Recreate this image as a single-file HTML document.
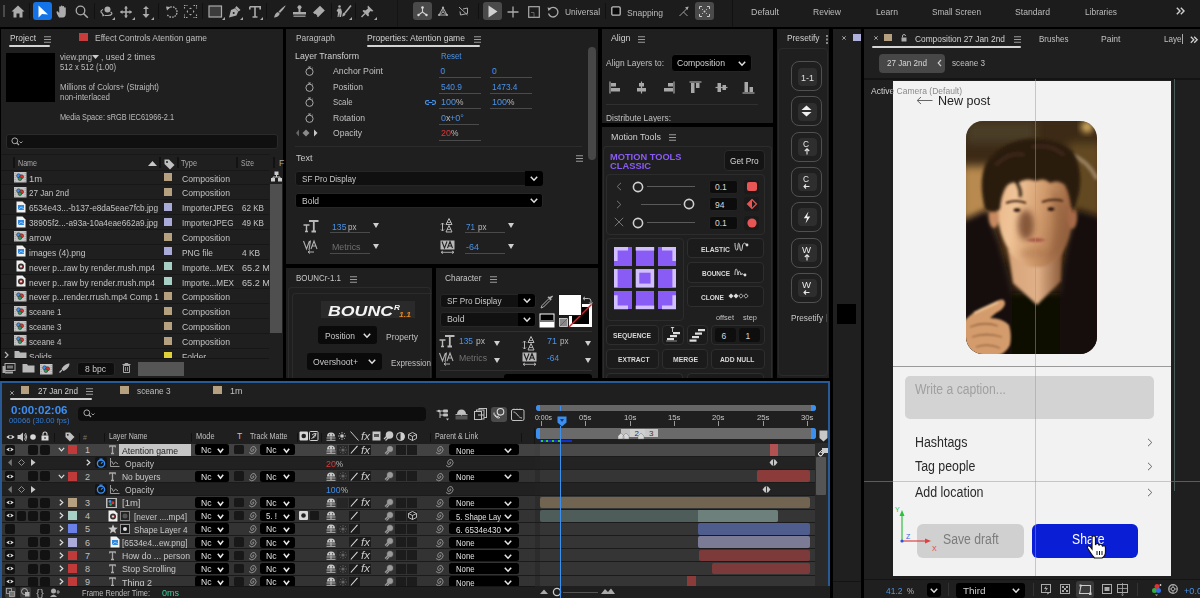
<!DOCTYPE html>
<html><head><meta charset="utf-8"><style>
*{margin:0;padding:0;box-sizing:border-box}
html,body{width:1200px;height:598px;overflow:hidden}
body{background:#000;position:relative;font-family:"Liberation Sans",sans-serif;font-size:8px;color:#b4b4b4}
.a{position:absolute}
svg.a{overflow:visible}
.t{position:absolute;white-space:nowrap;line-height:1;transform-origin:0 0}

</style></head><body>
<div class="a" style="left:0px;top:0px;width:1200px;height:27px;background:#1c1c1c;"></div>
<div class="a" style="left:3px;top:5px;width:2px;height:12px;background:#4a4a4a;"></div>
<svg class="a" style="left:11px;top:5px;" width="14" height="13" viewBox="0 0 14 13"><path d="M7 0.5L0.5 6.5H2.5V12.5H5.5V8.5H8.5V12.5H11.5V6.5H13.5Z" fill="#ababab"/></svg>
<div class="a" style="left:29px;top:3px;width:1px;height:16px;background:#111;"></div>
<div class="a" style="left:33px;top:2px;width:19px;height:18px;background:#1473e6;border-radius:3px;"></div>
<svg class="a" style="left:38px;top:5px;" width="11" height="13" viewBox="0 0 11 13"><path d="M0.5 0.5V12.5L4 9L10 9.5Z" fill="#fff"/></svg>
<svg class="a" style="left:56px;top:5px;" width="13" height="13" viewBox="0 0 13 13"><path d="M3 12.5C1.5 10 0.5 8 0.5 7C0.5 6 2 6 2.8 7.5L3.2 8V2C3.2 1 4.8 1 4.8 2V6V1.2C4.8 0.2 6.5 0.2 6.5 1.2V6V1.8C6.5 0.8 8.2 0.8 8.2 1.8V6.2V3C8.2 2 9.8 2 9.8 3V8.5C9.8 11 8.5 12.5 7 12.5Z" fill="#ababab"/></svg>
<svg class="a" style="left:75px;top:5px;" width="14" height="14" viewBox="0 0 14 14"><circle cx="5.5" cy="5.5" r="4.3" fill="none" stroke="#ababab" stroke-width="1.3"/><path d="M8.5 8.5L12.8 12.8" stroke="#ababab" stroke-width="1.6"/></svg>
<div class="a" style="left:94px;top:3px;width:1px;height:16px;background:#111;"></div>
<svg class="a" style="left:100px;top:6px;" width="14" height="11" viewBox="0 0 14 11"><circle cx="7.5" cy="3.5" r="3" fill="#ababab"/><path d="M3 3.5C0 4.5 0.5 7 3 7.5M10.5 6C13 7 12 9.5 8 9.5H5" fill="none" stroke="#ababab" stroke-width="1.2"/><path d="M2 7L5 9.5L2.5 10.5Z" fill="#ababab"/></svg>
<svg class="a" style="left:112px;top:17px;" width="3" height="3" viewBox="0 0 3 3"><path d="M3 0V3H0Z" fill="#ababab"/></svg>
<svg class="a" style="left:120px;top:6px;" width="12" height="12" viewBox="0 0 12 12"><path d="M6 0.5V11.5M0.5 6H11.5" stroke="#ababab" stroke-width="1.6"/><path d="M6 0L4 2.5H8ZM6 12L4 9.5H8ZM0 6L2.5 4V8ZM12 6L9.5 4V8Z" fill="#ababab"/></svg>
<svg class="a" style="left:132px;top:17px;" width="3" height="3" viewBox="0 0 3 3"><path d="M3 0V3H0Z" fill="#ababab"/></svg>
<svg class="a" style="left:142px;top:6px;" width="8" height="12" viewBox="0 0 8 12"><path d="M4 1V11" stroke="#ababab" stroke-width="1.4"/><path d="M4 0L1 3H7ZM4 12L0.5 8H7.5Z" fill="#ababab"/></svg>
<svg class="a" style="left:151px;top:17px;" width="3" height="3" viewBox="0 0 3 3"><path d="M3 0V3H0Z" fill="#ababab"/></svg>
<div class="a" style="left:158px;top:3px;width:1px;height:16px;background:#111;"></div>
<svg class="a" style="left:165px;top:5px;" width="13" height="14" viewBox="0 0 13 14"><path d="M3 3.5A5.2 5.2 0 1 1 2 9" fill="none" stroke="#ababab" stroke-width="1.3" stroke-dasharray="1.6 1"/><path d="M1 1.5L5.5 2L2 5.5Z" fill="#ababab"/></svg>
<svg class="a" style="left:184px;top:5px;" width="13" height="13" viewBox="0 0 13 13"><path d="M0.5 3.5V0.5H3.5M9.5 0.5H12.5V3.5M12.5 9.5V12.5H9.5M3.5 12.5H0.5V9.5" fill="none" stroke="#ababab" stroke-width="1.1" stroke-dasharray="1.5 1"/><path d="M6.5 2.5L5 4H8ZM6.5 10.5L5 9H8ZM2.5 6.5L4 5V8ZM10.5 6.5L9 5V8Z" fill="#ababab"/></svg>
<div class="a" style="left:202px;top:3px;width:1px;height:16px;background:#111;"></div>
<svg class="a" style="left:208px;top:5px;" width="15" height="13" viewBox="0 0 15 13"><rect x="1" y="1" width="12.5" height="11" fill="#3c3c3c" stroke="#ababab" stroke-width="1.2"/></svg>
<svg class="a" style="left:222px;top:17px;" width="3" height="3" viewBox="0 0 3 3"><path d="M3 0V3H0Z" fill="#ababab"/></svg>
<svg class="a" style="left:228px;top:5px;" width="14" height="14" viewBox="0 0 14 14"><path d="M8.5 1L12.5 5L10.5 6.5L7 3Z" fill="#ababab"/><path d="M7 3.3L10.2 6.5L8.5 10.5L1 12.5L3 5Z" fill="#ababab"/><circle cx="5.7" cy="8" r="1" fill="#1c1c1c"/></svg>
<svg class="a" style="left:240px;top:17px;" width="3" height="3" viewBox="0 0 3 3"><path d="M3 0V3H0Z" fill="#ababab"/></svg>
<svg class="a" style="left:249px;top:6px;" width="12" height="12" viewBox="0 0 12 12"><path d="M0.8 0.8H11.2V3.5M0.8 3.5V0.8M6 0.8V11M3.5 11H8.5" fill="none" stroke="#ababab" stroke-width="1.6"/></svg>
<svg class="a" style="left:260px;top:17px;" width="3" height="3" viewBox="0 0 3 3"><path d="M3 0V3H0Z" fill="#ababab"/></svg>
<div class="a" style="left:266px;top:3px;width:1px;height:16px;background:#111;"></div>
<svg class="a" style="left:273px;top:5px;" width="14" height="14" viewBox="0 0 14 14"><path d="M12.5 0.5C13 1 9 6 7 8L5.5 6.5C7.5 4.5 12 0 12.5 0.5Z" fill="#ababab"/><path d="M5 7L6.8 8.8C6 11 4 12.5 0.8 12.5C2 11.5 1.5 8 5 7Z" fill="#ababab"/></svg>
<svg class="a" style="left:292px;top:5px;" width="15" height="13" viewBox="0 0 15 13"><circle cx="7.5" cy="2.3" r="2" fill="#ababab"/><path d="M6.5 3.5H8.5V7H14V9.5H1V7H6.5Z" fill="#ababab"/><rect x="1.5" y="10.5" width="12" height="1.5" fill="#8a8a8a"/></svg>
<svg class="a" style="left:312px;top:5px;" width="14" height="14" viewBox="0 0 14 14"><path d="M8 0.8L12.8 5.5L6 12.3L1 7.5Z" fill="#ababab"/><path d="M3 9.3L4.8 11.2" stroke="#1c1c1c" stroke-width="1.4"/></svg>
<div class="a" style="left:331px;top:3px;width:1px;height:16px;background:#111;"></div>
<svg class="a" style="left:336px;top:5px;" width="16" height="13" viewBox="0 0 16 13"><circle cx="3.5" cy="1.5" r="1.3" fill="#ababab"/><path d="M2 3.5H5L6 7L5 12H3.5L3.5 8L2.5 12H1.5L2 7L0.5 6Z" fill="#ababab"/><path d="M15 0.5L9 8" stroke="#ababab" stroke-width="1.6"/><path d="M8.5 7.5C10 8.5 10 11 6 11.5C7 10 6 8 8.5 7.5Z" fill="#ababab"/></svg>
<svg class="a" style="left:349px;top:17px;" width="3" height="3" viewBox="0 0 3 3"><path d="M3 0V3H0Z" fill="#ababab"/></svg>
<div class="a" style="left:355px;top:3px;width:1px;height:16px;background:#111;"></div>
<svg class="a" style="left:361px;top:5px;" width="13" height="13" viewBox="0 0 13 13"><path d="M7 0.5L12.5 6L11 6.5L9.5 6L7.5 8.5L8 10.5L7 11.5L1.5 6L2.5 5L4.5 5.5L7 3.5L6.5 2Z" fill="#ababab"/><path d="M4 8.5L0.5 12" stroke="#ababab" stroke-width="1.4"/></svg>
<svg class="a" style="left:374px;top:17px;" width="3" height="3" viewBox="0 0 3 3"><path d="M3 0V3H0Z" fill="#ababab"/></svg>
<div class="a" style="left:397px;top:0px;width:1px;height:27px;background:#141414;"></div>
<div class="a" style="left:413px;top:2px;width:19px;height:18px;background:#4a4a4a;border-radius:3px;"></div>
<svg class="a" style="left:417px;top:6px;" width="11" height="11" viewBox="0 0 11 11"><path d="M5.5 1.5V6L1.5 9M5.5 6L9.5 9" stroke="#d0d0d0" stroke-width="1.1" fill="none"/><circle cx="5.5" cy="1.5" r="1.3" fill="#ddd"/><circle cx="1.5" cy="9" r="1.2" fill="#ddd"/><circle cx="9.5" cy="9" r="1.2" fill="#ddd"/></svg>
<svg class="a" style="left:437px;top:6px;" width="12" height="11" viewBox="0 0 12 11"><path d="M6 1.5L2 9H10Z M6 1.5V6L2 9M6 6L10 9" stroke="#ababab" stroke-width="1" fill="none"/><circle cx="6" cy="1.5" r="1.1" fill="#ababab"/><circle cx="2" cy="9" r="1.1" fill="#ababab"/><circle cx="10" cy="9" r="1.1" fill="#ababab"/></svg>
<svg class="a" style="left:458px;top:6px;" width="11" height="10" viewBox="0 0 11 10"><path d="M1 1L9.5 9M2 5.5L2.5 9L9.5 7.5V2L5 3" stroke="#ababab" stroke-width="1" fill="none"/></svg>
<div class="a" style="left:478px;top:3px;width:1px;height:16px;background:#111;"></div>
<div class="a" style="left:483px;top:2px;width:19px;height:18px;background:#4a4a4a;border-radius:3px;"></div>
<svg class="a" style="left:488px;top:5px;" width="10" height="13" viewBox="0 0 10 13"><path d="M0.5 0.5V12.5L9.5 6.5Z" fill="#d0d0d0"/></svg>
<svg class="a" style="left:507px;top:6px;" width="12" height="12" viewBox="0 0 12 12"><path d="M6 0.5V11.5M0.5 6H11.5" stroke="#ababab" stroke-width="1.3"/></svg>
<svg class="a" style="left:528px;top:6px;" width="12" height="12" viewBox="0 0 12 12"><rect x="0.7" y="0.7" width="10.6" height="10.6" fill="none" stroke="#ababab" stroke-width="1.2"/><path d="M3 6.5H6V11" fill="none" stroke="#777" stroke-width="0.8"/></svg>
<svg class="a" style="left:547px;top:6px;" width="12" height="12" viewBox="0 0 12 12"><path d="M2.5 3A4.8 4.8 0 1 1 1.5 7.5" fill="none" stroke="#ababab" stroke-width="1.3"/><path d="M0.5 1.5L4.5 2.2L1.5 5Z" fill="#ababab"/></svg>
<div class="t" style="transform:scaleX(0.884);left:565px;top:7.23px;font-size:9.5px;color:#bcbcbc;">Universal</div>
<div class="a" style="left:605px;top:3px;width:1px;height:16px;background:#111;"></div>
<svg class="a" style="left:611px;top:6px;" width="10" height="10" viewBox="0 0 10 10"><rect x="0.8" y="0.8" width="8.4" height="8.4" rx="1.2" fill="#0a0a0a" stroke="#bdbdbd" stroke-width="1.3"/></svg>
<div class="t" style="transform:scaleX(0.896);left:627px;top:8.23px;font-size:9.5px;color:#bcbcbc;">Snapping</div>
<svg class="a" style="left:679px;top:6px;" width="10" height="11" viewBox="0 0 10 11"><path d="M0.5 10L4.5 6L8.5 10M4.5 6L9 1.5" stroke="#ababab" stroke-width="0.9" fill="none"/><path d="M9.5 0.5L6 1.5L8.5 4Z" fill="#ababab"/></svg>
<div class="a" style="left:695px;top:2px;width:19px;height:18px;background:#4a4a4a;border-radius:3px;"></div>
<svg class="a" style="left:699px;top:6px;" width="11" height="11" viewBox="0 0 11 11"><path d="M0.5 3V0.5H3M8 0.5H10.5V3M10.5 8V10.5H8M3 10.5H0.5V8" fill="none" stroke="#ccc" stroke-width="1"/><circle cx="5.5" cy="5.5" r="1" fill="#ccc"/><path d="M3 3L4 4M8 3L7 4M3 8L4 7M8 8L7 7" stroke="#ccc" stroke-width="0.8"/></svg>
<div class="a" style="left:732px;top:0px;width:1px;height:27px;background:#111;"></div>
<div class="t" style="transform:scaleX(0.950);left:751px;top:8.39px;font-size:9.3px;color:#bcbcbc;">Default</div>
<div class="t" style="transform:scaleX(0.919);left:813px;top:8.39px;font-size:9.3px;color:#bcbcbc;">Review</div>
<div class="t" style="transform:scaleX(0.925);left:876px;top:8.39px;font-size:9.3px;color:#bcbcbc;">Learn</div>
<div class="t" style="transform:scaleX(0.886);left:932px;top:8.39px;font-size:9.3px;color:#bcbcbc;">Small Screen</div>
<div class="t" style="transform:scaleX(0.928);left:1015px;top:8.39px;font-size:9.3px;color:#bcbcbc;">Standard</div>
<div class="t" style="transform:scaleX(0.897);left:1085px;top:8.39px;font-size:9.3px;color:#bcbcbc;">Libraries</div>
<svg class="a" style="left:1176px;top:7px;" width="9" height="9" viewBox="0 0 9 9"><path d="M0.8 0.8L4 4L0.8 7.2M4.8 0.8L8 4L4.8 7.2" stroke="#d0d0d0" stroke-width="1.4" fill="none"/></svg>
<div class="a" style="left:1px;top:29px;width:282px;height:349px;background:#1f1f1f;"></div>
<div class="t" style="transform:scaleX(0.879);left:10px;top:33.22px;font-size:9.5px;color:#d0d0d0;">Project</div>
<svg class="a" style="left:44px;top:36px;" width="7" height="7" viewBox="0 0 7 7"><path d="M0 0.75H7M0 3.5H7M0 6.25H7" stroke="#9a9a9a" stroke-width="1.2"/></svg>
<div class="a" style="left:9px;top:45px;width:41px;height:2px;background:#d4d4d4;border-radius:1px;"></div>
<div class="a" style="left:79px;top:33px;width:9px;height:8px;background:#c83c3c;"></div>
<div class="t" style="transform:scaleX(0.892);left:95px;top:33.22px;font-size:9.5px;color:#c0c0c0;">Effect Controls Atention game</div>
<div class="a" style="left:6px;top:53px;width:49px;height:49px;background:#000;"></div>
<div class="t" style="transform:scaleX(0.967);left:60px;top:52.98px;font-size:8.5px;color:#bdbdbd;">view.png</div>
<svg class="a" style="left:92px;top:55px;" width="7" height="4" viewBox="0 0 7 4"><path d="M0 0H7L3.5 4Z" fill="#ccc"/></svg>
<div class="t" style="transform:scaleX(1.020);left:101px;top:52.98px;font-size:8.5px;color:#bdbdbd;">, used 2 times</div>
<div class="t" style="transform:scaleX(0.905);left:60px;top:62.98px;font-size:8.5px;color:#bdbdbd;">512 x 512 (1.00)</div>
<div class="t" style="transform:scaleX(0.925);left:60px;top:82.98px;font-size:8.5px;color:#bdbdbd;">Millions of Colors+ (Straight)</div>
<div class="t" style="transform:scaleX(0.928);left:60px;top:92.98px;font-size:8.5px;color:#bdbdbd;">non-interlaced</div>
<div class="t" style="transform:scaleX(0.865);left:60px;top:112.98px;font-size:8.5px;color:#bdbdbd;">Media Space: sRGB IEC61966-2.1</div>
<div class="a" style="left:6px;top:134px;width:272px;height:15px;background:#101010;border-radius:3px;border:1px solid #2a2a2a;"></div>
<svg class="a" style="left:11px;top:137px;" width="13" height="9" viewBox="0 0 13 9"><circle cx="3.8" cy="3.8" r="2.9" fill="none" stroke="#aaa" stroke-width="1"/><path d="M5.8 5.8L8 8" stroke="#aaa" stroke-width="1.2"/><path d="M8.5 4.5L10 6L11.5 4.5" stroke="#aaa" stroke-width="0.9" fill="none"/></svg>
<div class="a" style="left:1px;top:154px;width:269px;height:1px;background:#181818;"></div>
<div class="a" style="left:13px;top:157px;width:2px;height:11px;background:#121212;"></div>
<div class="a" style="left:159px;top:157px;width:2px;height:11px;background:#121212;"></div>
<div class="a" style="left:177px;top:157px;width:2px;height:11px;background:#121212;"></div>
<div class="a" style="left:236px;top:157px;width:2px;height:11px;background:#121212;"></div>
<div class="a" style="left:273px;top:157px;width:2px;height:11px;background:#121212;"></div>
<div class="t" style="transform:scaleX(0.837);left:18px;top:158.97px;font-size:8.5px;color:#a8a8a8;">Name</div>
<svg class="a" style="left:148px;top:161px;" width="9" height="5" viewBox="0 0 9 5"><path d="M0 5L4.5 0L9 5Z" fill="#c8c8c8"/></svg>
<svg class="a" style="left:164px;top:159px;" width="11" height="10" viewBox="0 0 11 10"><path d="M0.5 0.5H5L10.5 6L6 10.5L0.5 5Z" fill="#c0c0c0"/><circle cx="3" cy="3" r="1" fill="#1f1f1f"/></svg>
<div class="t" style="transform:scaleX(0.868);left:181px;top:158.97px;font-size:8.5px;color:#a8a8a8;">Type</div>
<div class="t" style="transform:scaleX(0.786);left:241px;top:158.97px;font-size:8.5px;color:#a8a8a8;">Size</div>
<div class="t" style="left:279px;top:158.97px;font-size:8.5px;color:#a8a8a8;">F</div>
<div class="a" style="left:1px;top:170px;width:269px;height:1px;background:#171717;"></div>
<svg class="a" style="left:14px;top:172px;" width="13" height="11" viewBox="0 0 13 11"><rect x="0" y="0" width="12.5" height="10.5" fill="#c4c4c4"/><path d="M0.5 1.5H2M0.5 3.5H2M0.5 5.5H2M0.5 7.5H2M0.5 9.5H2M10.5 1.5H12M10.5 3.5H12M10.5 5.5H12M10.5 7.5H12M10.5 9.5H12" stroke="#a0a0a0" stroke-width="0.7"/><circle cx="4.6" cy="3.8" r="2" fill="#3b8eea" stroke="#333" stroke-width="0.6"/><circle cx="7.6" cy="4.8" r="2" fill="#e0302a" stroke="#333" stroke-width="0.6"/><circle cx="5.9" cy="6.8" r="1.8" fill="#2a9a5a" stroke="#333" stroke-width="0.6"/></svg>
<div class="t" style="transform:scaleX(1.039);left:28.5px;top:174.85px;font-size:9px;color:#c4c4c4;">1m</div>
<div class="a" style="left:164px;top:173px;width:8px;height:8px;background:#b5a17f;"></div>
<div class="t" style="transform:scaleX(0.959);left:182px;top:174.85px;font-size:9px;color:#c4c4c4;">Composition</div>
<div class="a" style="left:1px;top:184px;width:269px;height:1px;background:#171717;"></div>
<svg class="a" style="left:14px;top:187px;" width="13" height="11" viewBox="0 0 13 11"><rect x="0" y="0" width="12.5" height="10.5" fill="#c4c4c4"/><path d="M0.5 1.5H2M0.5 3.5H2M0.5 5.5H2M0.5 7.5H2M0.5 9.5H2M10.5 1.5H12M10.5 3.5H12M10.5 5.5H12M10.5 7.5H12M10.5 9.5H12" stroke="#a0a0a0" stroke-width="0.7"/><circle cx="4.6" cy="3.8" r="2" fill="#3b8eea" stroke="#333" stroke-width="0.6"/><circle cx="7.6" cy="4.8" r="2" fill="#e0302a" stroke="#333" stroke-width="0.6"/><circle cx="5.9" cy="6.8" r="1.8" fill="#2a9a5a" stroke="#333" stroke-width="0.6"/></svg>
<div class="t" style="transform:scaleX(0.898);left:28.5px;top:188.85px;font-size:9px;color:#c4c4c4;">27 Jan 2nd</div>
<div class="a" style="left:164px;top:188px;width:8px;height:8px;background:#b5a17f;"></div>
<div class="t" style="transform:scaleX(0.959);left:182px;top:188.85px;font-size:9px;color:#c4c4c4;">Composition</div>
<div class="a" style="left:1px;top:199px;width:269px;height:1px;background:#171717;"></div>
<svg class="a" style="left:16px;top:201px;" width="10" height="12" viewBox="0 0 10 12"><path d="M0.5 0.5H6.5L9.5 3.5V11.5H0.5Z" fill="#f0f0f0"/><rect x="2" y="4" width="6" height="5" fill="#2f8ae0"/><path d="M2 9L5 6L8 8" stroke="#9cd0ff" stroke-width="0.8" fill="none"/></svg>
<div class="t" style="transform:scaleX(0.921);left:28.5px;top:203.85px;font-size:9px;color:#c4c4c4;">6534e43...-b137-e8da5eae7fcb.jpg</div>
<div class="a" style="left:164px;top:203px;width:8px;height:8px;background:#aaaad8;"></div>
<div class="t" style="transform:scaleX(0.903);left:182px;top:203.85px;font-size:9px;color:#c4c4c4;">ImporterJPEG</div>
<div class="t" style="transform:scaleX(0.897);left:242px;top:203.85px;font-size:9px;color:#c4c4c4;">62 KB</div>
<div class="a" style="left:1px;top:214px;width:269px;height:1px;background:#171717;"></div>
<svg class="a" style="left:16px;top:216px;" width="10" height="12" viewBox="0 0 10 12"><path d="M0.5 0.5H6.5L9.5 3.5V11.5H0.5Z" fill="#f0f0f0"/><rect x="2" y="4" width="6" height="5" fill="#2f8ae0"/><path d="M2 9L5 6L8 8" stroke="#9cd0ff" stroke-width="0.8" fill="none"/></svg>
<div class="t" style="transform:scaleX(0.917);left:28.5px;top:218.85px;font-size:9px;color:#c4c4c4;">38905f2...-a93a-10a4eae662a9.jpg</div>
<div class="a" style="left:164px;top:218px;width:8px;height:8px;background:#aaaad8;"></div>
<div class="t" style="transform:scaleX(0.903);left:182px;top:218.85px;font-size:9px;color:#c4c4c4;">ImporterJPEG</div>
<div class="t" style="transform:scaleX(0.897);left:242px;top:218.85px;font-size:9px;color:#c4c4c4;">49 KB</div>
<div class="a" style="left:1px;top:229px;width:269px;height:1px;background:#171717;"></div>
<svg class="a" style="left:14px;top:231px;" width="13" height="11" viewBox="0 0 13 11"><rect x="0" y="0" width="12.5" height="10.5" fill="#c4c4c4"/><path d="M0.5 1.5H2M0.5 3.5H2M0.5 5.5H2M0.5 7.5H2M0.5 9.5H2M10.5 1.5H12M10.5 3.5H12M10.5 5.5H12M10.5 7.5H12M10.5 9.5H12" stroke="#a0a0a0" stroke-width="0.7"/><circle cx="4.6" cy="3.8" r="2" fill="#3b8eea" stroke="#333" stroke-width="0.6"/><circle cx="7.6" cy="4.8" r="2" fill="#e0302a" stroke="#333" stroke-width="0.6"/><circle cx="5.9" cy="6.8" r="1.8" fill="#2a9a5a" stroke="#333" stroke-width="0.6"/></svg>
<div class="t" style="transform:scaleX(0.977);left:28.5px;top:233.85px;font-size:9px;color:#c4c4c4;">arrow</div>
<div class="a" style="left:164px;top:233px;width:8px;height:8px;background:#b5a17f;"></div>
<div class="t" style="transform:scaleX(0.959);left:182px;top:233.85px;font-size:9px;color:#c4c4c4;">Composition</div>
<div class="a" style="left:1px;top:244px;width:269px;height:1px;background:#171717;"></div>
<svg class="a" style="left:16px;top:245px;" width="10" height="12" viewBox="0 0 10 12"><path d="M0.5 0.5H6.5L9.5 3.5V11.5H0.5Z" fill="#f0f0f0"/><rect x="2" y="4" width="6" height="5" fill="#2f8ae0"/><path d="M2 9L5 6L8 8" stroke="#9cd0ff" stroke-width="0.8" fill="none"/></svg>
<div class="t" style="transform:scaleX(0.941);left:28.5px;top:248.85px;font-size:9px;color:#c4c4c4;">images (4).png</div>
<div class="a" style="left:164px;top:247px;width:8px;height:8px;background:#aaaad8;"></div>
<div class="t" style="transform:scaleX(0.925);left:182px;top:248.85px;font-size:9px;color:#c4c4c4;">PNG file</div>
<div class="t" style="transform:scaleX(0.922);left:242px;top:248.85px;font-size:9px;color:#c4c4c4;">4 KB</div>
<div class="a" style="left:1px;top:259px;width:269px;height:1px;background:#171717;"></div>
<svg class="a" style="left:16px;top:260px;" width="10" height="12" viewBox="0 0 10 12"><path d="M0.5 0.5H6.5L9.5 3.5V11.5H0.5Z" fill="#f0f0f0"/><circle cx="5" cy="6.5" r="3" fill="#333"/><circle cx="5" cy="6.5" r="1.8" fill="#b33"/><circle cx="5" cy="6.5" r="1" fill="#eee"/></svg>
<div class="t" style="transform:scaleX(0.933);left:28.5px;top:263.85px;font-size:9px;color:#c4c4c4;">never p...raw by render.rrush.mp4</div>
<div class="a" style="left:164px;top:262px;width:8px;height:8px;background:#a6d0c6;"></div>
<div class="t" style="transform:scaleX(0.904);left:182px;top:263.85px;font-size:9px;color:#c4c4c4;">Importe...MEX</div>
<div class="t" style="transform:scaleX(1.014);left:242px;top:263.85px;font-size:9px;color:#c4c4c4;">65.2 MB</div>
<div class="a" style="left:1px;top:274px;width:269px;height:1px;background:#171717;"></div>
<svg class="a" style="left:16px;top:275px;" width="10" height="12" viewBox="0 0 10 12"><path d="M0.5 0.5H6.5L9.5 3.5V11.5H0.5Z" fill="#f0f0f0"/><circle cx="5" cy="6.5" r="3" fill="#333"/><circle cx="5" cy="6.5" r="1.8" fill="#b33"/><circle cx="5" cy="6.5" r="1" fill="#eee"/></svg>
<div class="t" style="transform:scaleX(0.933);left:28.5px;top:278.85px;font-size:9px;color:#c4c4c4;">never p...raw by render.rrush.mp4</div>
<div class="a" style="left:164px;top:277px;width:8px;height:8px;background:#a6d0c6;"></div>
<div class="t" style="transform:scaleX(0.904);left:182px;top:278.85px;font-size:9px;color:#c4c4c4;">Importe...MEX</div>
<div class="t" style="transform:scaleX(1.014);left:242px;top:278.85px;font-size:9px;color:#c4c4c4;">65.2 MB</div>
<div class="a" style="left:1px;top:288px;width:269px;height:1px;background:#171717;"></div>
<svg class="a" style="left:14px;top:291px;" width="13" height="11" viewBox="0 0 13 11"><rect x="0" y="0" width="12.5" height="10.5" fill="#c4c4c4"/><path d="M0.5 1.5H2M0.5 3.5H2M0.5 5.5H2M0.5 7.5H2M0.5 9.5H2M10.5 1.5H12M10.5 3.5H12M10.5 5.5H12M10.5 7.5H12M10.5 9.5H12" stroke="#a0a0a0" stroke-width="0.7"/><circle cx="4.6" cy="3.8" r="2" fill="#3b8eea" stroke="#333" stroke-width="0.6"/><circle cx="7.6" cy="4.8" r="2" fill="#e0302a" stroke="#333" stroke-width="0.6"/><circle cx="5.9" cy="6.8" r="1.8" fill="#2a9a5a" stroke="#333" stroke-width="0.6"/></svg>
<div class="t" style="transform:scaleX(0.928);left:28.5px;top:292.85px;font-size:9px;color:#c4c4c4;">never p...render.rrush.mp4 Comp 1</div>
<div class="a" style="left:164px;top:292px;width:8px;height:8px;background:#b5a17f;"></div>
<div class="t" style="transform:scaleX(0.959);left:182px;top:292.85px;font-size:9px;color:#c4c4c4;">Composition</div>
<div class="a" style="left:1px;top:303px;width:269px;height:1px;background:#171717;"></div>
<svg class="a" style="left:14px;top:306px;" width="13" height="11" viewBox="0 0 13 11"><rect x="0" y="0" width="12.5" height="10.5" fill="#c4c4c4"/><path d="M0.5 1.5H2M0.5 3.5H2M0.5 5.5H2M0.5 7.5H2M0.5 9.5H2M10.5 1.5H12M10.5 3.5H12M10.5 5.5H12M10.5 7.5H12M10.5 9.5H12" stroke="#a0a0a0" stroke-width="0.7"/><circle cx="4.6" cy="3.8" r="2" fill="#3b8eea" stroke="#333" stroke-width="0.6"/><circle cx="7.6" cy="4.8" r="2" fill="#e0302a" stroke="#333" stroke-width="0.6"/><circle cx="5.9" cy="6.8" r="1.8" fill="#2a9a5a" stroke="#333" stroke-width="0.6"/></svg>
<div class="t" style="transform:scaleX(0.890);left:28.5px;top:307.85px;font-size:9px;color:#c4c4c4;">sceane 1</div>
<div class="a" style="left:164px;top:307px;width:8px;height:8px;background:#b5a17f;"></div>
<div class="t" style="transform:scaleX(0.959);left:182px;top:307.85px;font-size:9px;color:#c4c4c4;">Composition</div>
<div class="a" style="left:1px;top:318px;width:269px;height:1px;background:#171717;"></div>
<svg class="a" style="left:14px;top:321px;" width="13" height="11" viewBox="0 0 13 11"><rect x="0" y="0" width="12.5" height="10.5" fill="#c4c4c4"/><path d="M0.5 1.5H2M0.5 3.5H2M0.5 5.5H2M0.5 7.5H2M0.5 9.5H2M10.5 1.5H12M10.5 3.5H12M10.5 5.5H12M10.5 7.5H12M10.5 9.5H12" stroke="#a0a0a0" stroke-width="0.7"/><circle cx="4.6" cy="3.8" r="2" fill="#3b8eea" stroke="#333" stroke-width="0.6"/><circle cx="7.6" cy="4.8" r="2" fill="#e0302a" stroke="#333" stroke-width="0.6"/><circle cx="5.9" cy="6.8" r="1.8" fill="#2a9a5a" stroke="#333" stroke-width="0.6"/></svg>
<div class="t" style="transform:scaleX(0.890);left:28.5px;top:322.85px;font-size:9px;color:#c4c4c4;">sceane 3</div>
<div class="a" style="left:164px;top:322px;width:8px;height:8px;background:#b5a17f;"></div>
<div class="t" style="transform:scaleX(0.959);left:182px;top:322.85px;font-size:9px;color:#c4c4c4;">Composition</div>
<div class="a" style="left:1px;top:333px;width:269px;height:1px;background:#171717;"></div>
<svg class="a" style="left:14px;top:335px;" width="13" height="11" viewBox="0 0 13 11"><rect x="0" y="0" width="12.5" height="10.5" fill="#c4c4c4"/><path d="M0.5 1.5H2M0.5 3.5H2M0.5 5.5H2M0.5 7.5H2M0.5 9.5H2M10.5 1.5H12M10.5 3.5H12M10.5 5.5H12M10.5 7.5H12M10.5 9.5H12" stroke="#a0a0a0" stroke-width="0.7"/><circle cx="4.6" cy="3.8" r="2" fill="#3b8eea" stroke="#333" stroke-width="0.6"/><circle cx="7.6" cy="4.8" r="2" fill="#e0302a" stroke="#333" stroke-width="0.6"/><circle cx="5.9" cy="6.8" r="1.8" fill="#2a9a5a" stroke="#333" stroke-width="0.6"/></svg>
<div class="t" style="transform:scaleX(0.890);left:28.5px;top:337.85px;font-size:9px;color:#c4c4c4;">sceane 4</div>
<div class="a" style="left:164px;top:337px;width:8px;height:8px;background:#b5a17f;"></div>
<div class="t" style="transform:scaleX(0.959);left:182px;top:337.85px;font-size:9px;color:#c4c4c4;">Composition</div>
<div class="a" style="left:1px;top:348px;width:269px;height:1px;background:#171717;"></div>
<svg class="a" style="left:14px;top:350px;" width="13" height="10" viewBox="0 0 13 10"><path d="M0.5 1H5L6 2.5H12.5V9.5H0.5Z" fill="#b8b8b8"/></svg>
<svg class="a" style="left:4px;top:351px;" width="5" height="8" viewBox="0 0 5 8"><path d="M1 1L4 4L1 7" stroke="#bbb" stroke-width="1.2" fill="none"/></svg>
<div class="t" style="transform:scaleX(0.938);left:28.5px;top:352.85px;font-size:9px;color:#c4c4c4;">Solids</div>
<div class="a" style="left:164px;top:352px;width:8px;height:8px;background:#e0d03a;"></div>
<div class="t" style="transform:scaleX(0.941);left:182px;top:352.85px;font-size:9px;color:#c4c4c4;">Folder</div>
<div class="a" style="left:1px;top:358px;width:282px;height:20px;background:#1f1f1f;"></div>
<div class="a" style="left:1px;top:358px;width:282px;height:1px;background:#151515;"></div>
<div class="a" style="left:269px;top:170px;width:14px;height:189px;background:#1f1f1f;"></div>
<svg class="a" style="left:271px;top:171px;" width="11" height="11" viewBox="0 0 11 11"><rect x="3.5" y="0.5" width="4" height="3.5" fill="#ccc"/><path d="M5.5 4V6M2 9V6H9V9" stroke="#ccc" stroke-width="1" fill="none"/><rect x="0" y="7" width="4" height="3.5" fill="#ccc"/><rect x="7" y="7" width="4" height="3.5" fill="#ccc"/></svg>
<div class="a" style="left:270px;top:184px;width:12px;height:149px;background:#4f4f4f;"></div>
<svg class="a" style="left:2px;top:363px;" width="14" height="11" viewBox="0 0 14 11"><rect x="3" y="0.5" width="10" height="7" fill="none" stroke="#aaa" stroke-width="1"/><rect x="0.5" y="3" width="3" height="7" fill="#aaa"/><rect x="3" y="8.5" width="8" height="2" fill="#aaa"/><rect x="5" y="2.5" width="6" height="3" fill="#777"/></svg>
<svg class="a" style="left:22px;top:363px;" width="13" height="10" viewBox="0 0 13 10"><path d="M0.5 1H5L6 2.5H12.5V9.5H0.5Z" fill="#b8b8b8"/></svg>
<svg class="a" style="left:40px;top:364px;" width="13" height="11" viewBox="0 0 13 11"><rect x="0" y="0" width="12.5" height="10.5" fill="#c4c4c4"/><path d="M0.5 1.5H2M0.5 3.5H2M0.5 5.5H2M0.5 7.5H2M0.5 9.5H2M10.5 1.5H12M10.5 3.5H12M10.5 5.5H12M10.5 7.5H12M10.5 9.5H12" stroke="#a0a0a0" stroke-width="0.7"/><circle cx="4.6" cy="3.8" r="2" fill="#3b8eea" stroke="#333" stroke-width="0.6"/><circle cx="7.6" cy="4.8" r="2" fill="#e0302a" stroke="#333" stroke-width="0.6"/><circle cx="5.9" cy="6.8" r="1.8" fill="#2a9a5a" stroke="#333" stroke-width="0.6"/></svg>
<svg class="a" style="left:59px;top:363px;" width="11" height="10" viewBox="0 0 11 10"><path d="M10.5 0.5C7 0.5 4 3 2.5 6L4.5 8C7.5 6.5 10.5 4 10.5 0.5Z" fill="#bbb"/><path d="M3 7L0.5 9.5" stroke="#bbb" stroke-width="1.2"/></svg>
<div class="a" style="left:77px;top:362px;width:38px;height:14px;background:#0e0e0e;border-radius:3px;border:1px solid #262626;"></div>
<div class="t" style="transform:scaleX(0.953);left:85px;top:364.85px;font-size:9px;color:#c8c8c8;">8 bpc</div>
<svg class="a" style="left:122px;top:363px;" width="9" height="10" viewBox="0 0 9 10"><path d="M0.5 1.5H8.5M3 1.5V0.5H6V1.5M1.5 2.5H7.5V9.5H1.5Z" stroke="#aaa" stroke-width="1" fill="none"/><path d="M3.5 4V8M5.5 4V8" stroke="#aaa" stroke-width="0.8"/></svg>
<div class="a" style="left:138px;top:362px;width:46px;height:14px;background:#555;"></div>
<div class="a" style="left:286px;top:29px;width:312px;height:235px;background:#1f1f1f;"></div>
<div class="t" style="transform:scaleX(0.879);left:296px;top:33.22px;font-size:9.5px;color:#c0c0c0;">Paragraph</div>
<div class="t" style="transform:scaleX(0.896);left:367px;top:33.22px;font-size:9.5px;color:#d0d0d0;">Properties: Atention game</div>
<svg class="a" style="left:474px;top:36px;" width="7" height="7" viewBox="0 0 7 7"><path d="M0 0.75H7M0 3.5H7M0 6.25H7" stroke="#9a9a9a" stroke-width="1.2"/></svg>
<div class="a" style="left:367px;top:45px;width:113px;height:2px;background:#d4d4d4;border-radius:1px;"></div>
<div class="a" style="left:588px;top:47px;width:8px;height:113px;background:#474747;border-radius:4px;"></div>
<div class="t" style="transform:scaleX(0.977);left:295px;top:51.85px;font-size:9px;color:#d0d0d0;">Layer Transform</div>
<div class="t" style="transform:scaleX(0.923);left:440.6px;top:51.98px;font-size:8.5px;color:#4b93e8;">Reset</div>
<svg class="a" style="left:305px;top:66px;" width="9" height="10" viewBox="0 0 9 10"><circle cx="4.5" cy="5.8" r="3.6" fill="none" stroke="#a8a8a8" stroke-width="1"/><path d="M3 1H6M4.5 1V2.2M7.3 2.2L8 1.6" stroke="#a8a8a8" stroke-width="0.9"/></svg>
<div class="t" style="transform:scaleX(1.027);left:332.5px;top:66.98px;font-size:8.5px;color:#c0c0c0;">Anchor Point</div>
<svg class="a" style="left:305px;top:82px;" width="9" height="10" viewBox="0 0 9 10"><circle cx="4.5" cy="5.8" r="3.6" fill="none" stroke="#a8a8a8" stroke-width="1"/><path d="M3 1H6M4.5 1V2.2M7.3 2.2L8 1.6" stroke="#a8a8a8" stroke-width="0.9"/></svg>
<div class="t" style="transform:scaleX(0.992);left:332.5px;top:82.98px;font-size:8.5px;color:#c0c0c0;">Position</div>
<svg class="a" style="left:305px;top:97px;" width="9" height="10" viewBox="0 0 9 10"><circle cx="4.5" cy="5.8" r="3.6" fill="none" stroke="#a8a8a8" stroke-width="1"/><path d="M3 1H6M4.5 1V2.2M7.3 2.2L8 1.6" stroke="#a8a8a8" stroke-width="0.9"/></svg>
<div class="t" style="transform:scaleX(0.917);left:332.5px;top:97.98px;font-size:8.5px;color:#c0c0c0;">Scale</div>
<svg class="a" style="left:305px;top:113px;" width="9" height="10" viewBox="0 0 9 10"><circle cx="4.5" cy="5.8" r="3.6" fill="none" stroke="#a8a8a8" stroke-width="1"/><path d="M3 1H6M4.5 1V2.2M7.3 2.2L8 1.6" stroke="#a8a8a8" stroke-width="0.9"/></svg>
<div class="t" style="transform:scaleX(1.010);left:332.5px;top:113.98px;font-size:8.5px;color:#c0c0c0;">Rotation</div>
<div class="t" style="transform:scaleX(1.006);left:332.5px;top:128.97px;font-size:8.5px;color:#c0c0c0;">Opacity</div>
<svg class="a" style="left:296px;top:129px;" width="26" height="8" viewBox="0 0 26 8"><path d="M3 0.5L0 4L3 7.5Z" fill="#666"/><path d="M10 0.5L13.5 4L10 7.5L6.5 4Z" fill="#8a8a8a"/><path d="M18 0.5L21.5 4L18 7.5Z" fill="#c8c8c8"/></svg>
<div class="t" style="left:440.6px;top:66.98px;font-size:8.5px;color:#4b93e8;">0</div>
<div class="a" style="left:439px;top:77px;width:42px;height:1px;background:#4a4a4a;"></div>
<div class="t" style="left:492px;top:66.98px;font-size:8.5px;color:#4b93e8;">0</div>
<div class="a" style="left:490px;top:77px;width:42px;height:1px;background:#4a4a4a;"></div>
<div class="t" style="transform:scaleX(0.987);left:440.6px;top:82.98px;font-size:8.5px;color:#4b93e8;">540.9</div>
<div class="a" style="left:439px;top:92.5px;width:42px;height:1px;background:#4a4a4a;"></div>
<div class="t" style="transform:scaleX(0.981);left:491.5px;top:82.98px;font-size:8.5px;color:#4b93e8;">1473.4</div>
<div class="a" style="left:490px;top:92.5px;width:42px;height:1px;background:#4a4a4a;"></div>
<svg class="a" style="left:425px;top:100px;" width="11" height="5" viewBox="0 0 11 5"><path d="M4 0.6H2.3A1.9 1.9 0 0 0 2.3 4.4H4M7 0.6H8.7A1.9 1.9 0 0 1 8.7 4.4H7M3.5 2.5H7.5" stroke="#4b93e8" stroke-width="1.1" fill="none"/></svg>
<div class="t" style="transform:scaleX(1.057);left:440.6px;top:97.98px;font-size:8.5px;color:#4b93e8;">100</div>
<div class="t" style="transform:scaleX(0.992);left:456px;top:97.98px;font-size:8.5px;color:#bbb;">%</div>
<div class="a" style="left:439px;top:108px;width:42px;height:1px;background:#4a4a4a;"></div>
<div class="t" style="transform:scaleX(1.057);left:491.5px;top:97.98px;font-size:8.5px;color:#4b93e8;">100</div>
<div class="t" style="transform:scaleX(0.992);left:507px;top:97.98px;font-size:8.5px;color:#bbb;">%</div>
<div class="a" style="left:490px;top:108px;width:42px;height:1px;background:#4a4a4a;"></div>
<div class="t" style="transform:scaleX(1.056);left:440.6px;top:113.98px;font-size:8.5px;color:#4b93e8;">0</div>
<div class="t" style="transform:scaleX(1.059);left:445.6px;top:113.98px;font-size:8.5px;color:#bbb;">x</div>
<div class="t" style="transform:scaleX(1.069);left:450px;top:113.98px;font-size:8.5px;color:#4b93e8;">+0°</div>
<div class="a" style="left:439px;top:123.5px;width:40px;height:1px;background:#4a4a4a;"></div>
<div class="t" style="transform:scaleX(1.056);left:440.6px;top:128.97px;font-size:8.5px;color:#d83b3b;">20</div>
<div class="t" style="transform:scaleX(0.992);left:450.8px;top:128.97px;font-size:8.5px;color:#bbb;">%</div>
<div class="a" style="left:439px;top:139.5px;width:42px;height:1px;background:#4a4a4a;"></div>
<div class="a" style="left:295px;top:145.5px;width:287px;height:1px;background:#2c2c2c;"></div>
<div class="t" style="transform:scaleX(1.058);left:295.5px;top:153.97px;font-size:8.5px;color:#c8c8c8;">Text</div>
<svg class="a" style="left:576px;top:155px;" width="7" height="7" viewBox="0 0 7 7"><path d="M0 0.75H7M0 3.5H7M0 6.25H7" stroke="#9a9a9a" stroke-width="1.2"/></svg>
<div class="a" style="left:295px;top:171px;width:248px;height:15px;background:#101010;border-radius:3px;border:1px solid #262626;"></div>
<div class="a" style="left:525px;top:171px;width:18px;height:15px;background:#000;border-radius:0 3px 3px 0;"></div>
<div class="t" style="transform:scaleX(0.953);left:302px;top:174.97px;font-size:8.5px;color:#c8c8c8;">SF Pro Display</div>
<svg class="a" style="left:530px;top:176px;" width="8" height="5" viewBox="0 0 8 5"><path d="M0.8 0.8L4.0 4.2L7.2 0.8" stroke="#e0e0e0" stroke-width="1.5" fill="none"/></svg>
<div class="a" style="left:295px;top:193px;width:248px;height:15px;background:#000;border-radius:3px;border:1px solid #262626;"></div>
<div class="t" style="transform:scaleX(0.999);left:302px;top:196.97px;font-size:8.5px;color:#c8c8c8;">Bold</div>
<svg class="a" style="left:530px;top:198px;" width="8" height="5" viewBox="0 0 8 5"><path d="M0.8 0.8L4.0 4.2L7.2 0.8" stroke="#e0e0e0" stroke-width="1.5" fill="none"/></svg>
<svg class="a" style="left:303px;top:220px;" width="16" height="12" viewBox="0 0 16 12"><path d="M0.5 5H6.5M3.5 5V11.5M2 11.5H5" stroke="#b8b8b8" stroke-width="1.4" fill="none"/><path d="M6 1H15.5M10.8 1V11.5M8.5 11.5H13" stroke="#b8b8b8" stroke-width="1.8" fill="none"/></svg>
<div class="t" style="transform:scaleX(1.022);left:331.5px;top:222.97px;font-size:8.5px;color:#4b93e8;">135</div>
<div class="t" style="transform:scaleX(0.946);left:348px;top:222.97px;font-size:8.5px;color:#bbb;">px</div>
<div class="a" style="left:330px;top:232px;width:40px;height:1px;background:#4a4a4a;"></div>
<svg class="a" style="left:373px;top:222.5px;" width="6" height="5" viewBox="0 0 6 5"><path d="M0 0H6L3 5Z" fill="#cfcfcf"/></svg>
<svg class="a" style="left:440px;top:218px;" width="14" height="15" viewBox="0 0 14 15"><path d="M9 0.5L6 6.5H12Z M9 7.5L6 14H12Z" fill="none" stroke="#b8b8b8" stroke-width="1"/><path d="M7 4.5H11M7 11.5H11" stroke="#b8b8b8" stroke-width="0.8"/><path d="M2.5 5V13M1 6.5L2.5 5L4 6.5M1 11.5L2.5 13L4 11.5" stroke="#b8b8b8" stroke-width="1" fill="none"/></svg>
<div class="t" style="transform:scaleX(0.950);left:466px;top:222.97px;font-size:8.5px;color:#4b93e8;">71</div>
<div class="t" style="transform:scaleX(0.946);left:478px;top:222.97px;font-size:8.5px;color:#bbb;">px</div>
<div class="a" style="left:465px;top:232px;width:40px;height:1px;background:#4a4a4a;"></div>
<svg class="a" style="left:508px;top:222.5px;" width="6" height="5" viewBox="0 0 6 5"><path d="M0 0H6L3 5Z" fill="#cfcfcf"/></svg>
<svg class="a" style="left:303px;top:240px;" width="16" height="14" viewBox="0 0 16 14"><path d="M0.5 1L3.5 9L6.5 1M8 9L11 1L14 9M9.5 6H12.5M7.5 0.5L6 10" stroke="#b0b0b0" stroke-width="1.1" fill="none"/><path d="M5 12H11M7 10.5L5 12L7 13.5" stroke="#b0b0b0" stroke-width="1" fill="none"/></svg>
<div class="t" style="transform:scaleX(1.041);left:331.5px;top:242.97px;font-size:8.5px;color:#6f6f6f;">Metrics</div>
<div class="a" style="left:330px;top:253px;width:40px;height:1px;background:#4a4a4a;"></div>
<svg class="a" style="left:373px;top:244px;" width="6" height="5" viewBox="0 0 6 5"><path d="M0 0H6L3 5Z" fill="#cfcfcf"/></svg>
<svg class="a" style="left:440px;top:240px;" width="15" height="14" viewBox="0 0 15 14"><rect x="0.5" y="0.5" width="14" height="9" fill="#b8b8b8"/><path d="M2 1.5L4.5 8L7 1.5M7.5 8L10 1.5L12.5 8M8.5 6H11.5" stroke="#222" stroke-width="1.1" fill="none"/><path d="M1 12.3H14M3 11L1 12.3L3 13.6M12 11L14 12.3L12 13.6" stroke="#b8b8b8" stroke-width="0.9" fill="none"/></svg>
<div class="t" style="transform:scaleX(1.057);left:466px;top:242.97px;font-size:8.5px;color:#4b93e8;">-64</div>
<div class="a" style="left:465px;top:253px;width:40px;height:1px;background:#4a4a4a;"></div>
<svg class="a" style="left:508px;top:244px;" width="6" height="5" viewBox="0 0 6 5"><path d="M0 0H6L3 5Z" fill="#cfcfcf"/></svg>
<div class="a" style="left:286px;top:268px;width:146px;height:110px;background:#1f1f1f;"></div>
<div class="t" style="transform:scaleX(0.882);left:296px;top:273.85px;font-size:9px;color:#c8c8c8;">BOUNCr-1.1</div>
<svg class="a" style="left:350px;top:276px;" width="7" height="7" viewBox="0 0 7 7"><path d="M0 0.75H7M0 3.5H7M0 6.25H7" stroke="#9a9a9a" stroke-width="1.2"/></svg>
<div class="a" style="left:287.5px;top:287px;width:143px;height:91px;border:1px solid #2b2b2b;border-bottom:none;border-radius:4px 4px 0 0;"></div>
<div class="a" style="left:292px;top:293px;width:140px;height:85px;border:1px solid #2b2b2b;border-right:none;border-bottom:none;border-radius:4px 0 0 0;"></div>
<div class="a" style="left:321px;top:301px;width:94px;height:17px;background:#2a2a2a;"></div>
<div class="t" style="transform:scaleX(1.182);left:328px;top:303.25px;font-size:15px;color:#f4f4f4;font-weight:bold;font-style:italic;">BOUNC</div>
<div class="t" style="transform:scaleX(1.185);left:393.5px;top:304.25px;font-size:7px;color:#f4f4f4;font-weight:bold;font-style:italic;">R</div>
<div class="t" style="transform:scaleX(1.150);left:399px;top:310.93px;font-size:7.5px;color:#e8891e;font-weight:bold;font-style:italic;">1.1</div>
<div class="a" style="left:318px;top:326px;width:59px;height:17.5px;background:#0a0a0a;border-radius:3px;"></div>
<div class="t" style="transform:scaleX(0.937);left:325px;top:331.85px;font-size:9px;color:#c8c8c8;">Position</div>
<svg class="a" style="left:363px;top:333px;" width="8" height="5" viewBox="0 0 8 5"><path d="M0.8 0.8L4.0 4.2L7.2 0.8" stroke="#e0e0e0" stroke-width="1.5" fill="none"/></svg>
<div class="t" style="transform:scaleX(0.941);left:386px;top:332.85px;font-size:9px;color:#c0c0c0;">Property</div>
<div class="a" style="left:306.5px;top:352.5px;width:75px;height:17px;background:#0a0a0a;border-radius:3px;"></div>
<div class="t" style="transform:scaleX(0.962);left:313px;top:357.85px;font-size:9px;color:#c8c8c8;">Overshoot+</div>
<svg class="a" style="left:368px;top:359px;" width="8" height="5" viewBox="0 0 8 5"><path d="M0.8 0.8L4.0 4.2L7.2 0.8" stroke="#e0e0e0" stroke-width="1.5" fill="none"/></svg>
<div class="t" style="transform:scaleX(0.898);left:390.5px;top:358.85px;font-size:9px;color:#c0c0c0;">Expression</div>
<div class="a" style="left:436px;top:268px;width:162px;height:110px;background:#1f1f1f;"></div>
<div class="t" style="transform:scaleX(0.924);left:445.2px;top:273.85px;font-size:9px;color:#c8c8c8;">Character</div>
<svg class="a" style="left:490px;top:276px;" width="7" height="7" viewBox="0 0 7 7"><path d="M0 0.75H7M0 3.5H7M0 6.25H7" stroke="#9a9a9a" stroke-width="1.2"/></svg>
<div class="a" style="left:440px;top:293.5px;width:95.5px;height:14px;background:#111;border-radius:3px;border:1px solid #262626;"></div>
<div class="a" style="left:518px;top:294px;width:17px;height:13px;background:#000;border-radius:0 3px 3px 0;"></div>
<div class="t" style="transform:scaleX(0.961);left:446.5px;top:296.97px;font-size:8.5px;color:#c8c8c8;">SF Pro Display</div>
<svg class="a" style="left:523px;top:298px;" width="8" height="5" viewBox="0 0 8 5"><path d="M0.8 0.8L4.0 4.2L7.2 0.8" stroke="#e0e0e0" stroke-width="1.5" fill="none"/></svg>
<div class="a" style="left:440px;top:312px;width:95.5px;height:14.5px;background:#111;border-radius:3px;border:1px solid #262626;"></div>
<div class="a" style="left:518px;top:312.5px;width:17px;height:13.5px;background:#000;border-radius:0 3px 3px 0;"></div>
<div class="t" style="transform:scaleX(1.028);left:446.5px;top:314.97px;font-size:8.5px;color:#c8c8c8;">Bold</div>
<svg class="a" style="left:523px;top:316.5px;" width="8" height="5" viewBox="0 0 8 5"><path d="M0.8 0.8L4.0 4.2L7.2 0.8" stroke="#e0e0e0" stroke-width="1.5" fill="none"/></svg>
<svg class="a" style="left:540px;top:294px;" width="14" height="15" viewBox="0 0 14 15"><path d="M12.5 1.5L13 2.5L11 4.5L11.8 5.3L10.5 6.5L7.5 3.5L8.8 2.2L9.5 3Z" fill="#b0b0b0"/><path d="M8.5 5L2 11.5L1 14L3.5 13L10 6.5" stroke="#b0b0b0" stroke-width="1" fill="none"/></svg>
<svg class="a" style="left:539px;top:313px;" width="16" height="15" viewBox="0 0 16 15"><rect x="0.5" y="0.5" width="15" height="14" fill="#fff"/><rect x="1.5" y="1.5" width="13" height="5.5" fill="#000"/><rect x="1.5" y="9" width="13" height="4.5" fill="#fff"/><rect x="0.5" y="7" width="15" height="2" fill="#777"/></svg>
<svg class="a" style="left:568.5px;top:303.5px;" width="23" height="23" viewBox="0 0 23 23"><rect x="0" y="0" width="23" height="23" fill="#fff"/><rect x="3" y="3" width="17" height="17" fill="#000"/><path d="M0 23L23 0" stroke="#e0202a" stroke-width="1.4"/></svg>
<div class="a" style="left:558px;top:293.5px;width:23.5px;height:22.5px;background:#fff;border:1px solid #1a1a1a;"></div>
<svg class="a" style="left:582px;top:296px;" width="10" height="10" viewBox="0 0 10 10"><path d="M1 2.5H6.5A2.5 2.5 0 0 1 9 5V8.5M1 2.5L3 0.8M1 2.5L3 4.2M9 8.5L7.3 6.5M9 8.5L10.5 6.5" stroke="#b8b8b8" stroke-width="1" fill="none"/></svg>
<svg class="a" style="left:559px;top:318px;" width="9" height="9" viewBox="0 0 9 9"><rect x="0.5" y="0.5" width="8" height="8" fill="#888" stroke="#ddd" stroke-width="0.8"/><path d="M0.5 8.5L8.5 0.5" stroke="#e03030" stroke-width="1"/></svg>
<div class="a" style="left:440px;top:331px;width:152px;height:1px;background:#303030;"></div>
<svg class="a" style="left:439px;top:335px;" width="16" height="12" viewBox="0 0 16 12"><path d="M0.5 5H6.5M3.5 5V11.5M2 11.5H5" stroke="#b8b8b8" stroke-width="1.4" fill="none"/><path d="M6 1H15.5M10.8 1V11.5M8.5 11.5H13" stroke="#b8b8b8" stroke-width="1.8" fill="none"/></svg>
<div class="t" style="transform:scaleX(0.987);left:459px;top:336.97px;font-size:8.5px;color:#4b93e8;">135</div>
<div class="t" style="transform:scaleX(1.002);left:476px;top:336.97px;font-size:8.5px;color:#bbb;">px</div>
<svg class="a" style="left:494px;top:341px;" width="6" height="5" viewBox="0 0 6 5"><path d="M0 0H6L3 5Z" fill="#cfcfcf"/></svg>
<svg class="a" style="left:522px;top:336px;" width="14" height="15" viewBox="0 0 14 15"><path d="M9 0.5L6 6.5H12Z M9 7.5L6 14H12Z" fill="none" stroke="#b8b8b8" stroke-width="1"/><path d="M7 4.5H11M7 11.5H11" stroke="#b8b8b8" stroke-width="0.8"/><path d="M2.5 5V13M1 6.5L2.5 5L4 6.5M1 11.5L2.5 13L4 11.5" stroke="#b8b8b8" stroke-width="1" fill="none"/></svg>
<div class="t" style="transform:scaleX(1.056);left:547px;top:336.97px;font-size:8.5px;color:#4b93e8;">71</div>
<div class="t" style="transform:scaleX(0.946);left:560px;top:336.97px;font-size:8.5px;color:#bbb;">px</div>
<svg class="a" style="left:585px;top:341px;" width="6" height="5" viewBox="0 0 6 5"><path d="M0 0H6L3 5Z" fill="#cfcfcf"/></svg>
<svg class="a" style="left:439px;top:352px;" width="16" height="14" viewBox="0 0 16 14"><path d="M0.5 1L3.5 9L6.5 1M8 9L11 1L14 9M9.5 6H12.5M7.5 0.5L6 10" stroke="#b0b0b0" stroke-width="1.1" fill="none"/><path d="M5 12H11M7 10.5L5 12L7 13.5" stroke="#b0b0b0" stroke-width="1" fill="none"/></svg>
<div class="t" style="transform:scaleX(1.022);left:459px;top:353.97px;font-size:8.5px;color:#727272;">Metrics</div>
<svg class="a" style="left:494px;top:358px;" width="6" height="5" viewBox="0 0 6 5"><path d="M0 0H6L3 5Z" fill="#cfcfcf"/></svg>
<svg class="a" style="left:522px;top:352px;" width="15" height="14" viewBox="0 0 15 14"><rect x="0.5" y="0.5" width="14" height="9" fill="#b8b8b8"/><path d="M2 1.5L4.5 8L7 1.5M7.5 8L10 1.5L12.5 8M8.5 6H11.5" stroke="#222" stroke-width="1.1" fill="none"/><path d="M1 12.3H14M3 11L1 12.3L3 13.6M12 11L14 12.3L12 13.6" stroke="#b8b8b8" stroke-width="0.9" fill="none"/></svg>
<div class="t" style="transform:scaleX(0.976);left:547px;top:353.97px;font-size:8.5px;color:#4b93e8;">-64</div>
<svg class="a" style="left:585px;top:358px;" width="6" height="5" viewBox="0 0 6 5"><path d="M0 0H6L3 5Z" fill="#cfcfcf"/></svg>
<div class="a" style="left:440px;top:369.5px;width:152px;height:1px;background:#303030;"></div>
<div class="a" style="left:504px;top:374px;width:88px;height:4px;background:#000;border-radius:3px 3px 0 0;"></div>
<div class="a" style="left:602px;top:29px;width:171px;height:94px;background:#1f1f1f;"></div>
<div class="t" style="transform:scaleX(0.923);left:611px;top:33.22px;font-size:9.5px;color:#d0d0d0;">Align</div>
<svg class="a" style="left:638px;top:36px;" width="7" height="7" viewBox="0 0 7 7"><path d="M0 0.75H7M0 3.5H7M0 6.25H7" stroke="#9a9a9a" stroke-width="1.2"/></svg>
<div class="t" style="transform:scaleX(0.935);left:606px;top:58.85px;font-size:9px;color:#c0c0c0;">Align Layers to:</div>
<div class="a" style="left:670.5px;top:54.3px;width:81.5px;height:18px;background:#000;border:1px solid #242424;border-radius:4px;"></div>
<div class="t" style="transform:scaleX(0.959);left:677px;top:58.85px;font-size:9px;color:#d0d0d0;">Composition</div>
<svg class="a" style="left:738px;top:61px;" width="8" height="5" viewBox="0 0 8 5"><path d="M0.8 0.8L4.0 4.2L7.2 0.8" stroke="#e0e0e0" stroke-width="1.5" fill="none"/></svg>
<svg class="a" style="left:609px;top:81px;" width="12" height="13" viewBox="0 0 12 13"><path d="M1 0.5V12.5" stroke="#a8a8a8" stroke-width="1.2"/><rect x="2" y="2" width="5" height="3.5" fill="#a8a8a8"/><rect x="2" y="7" width="9" height="3.5" fill="#a8a8a8"/></svg>
<svg class="a" style="left:636px;top:81px;" width="11" height="13" viewBox="0 0 11 13"><path d="M5.5 0.5V12.5" stroke="#a8a8a8" stroke-width="1.2"/><rect x="3" y="2" width="5" height="3.5" fill="#a8a8a8"/><rect x="1" y="7" width="9" height="3.5" fill="#a8a8a8"/></svg>
<svg class="a" style="left:663px;top:81px;" width="12" height="13" viewBox="0 0 12 13"><path d="M11 0.5V12.5" stroke="#a8a8a8" stroke-width="1.2"/><rect x="5" y="2" width="5" height="3.5" fill="#a8a8a8"/><rect x="1" y="7" width="9" height="3.5" fill="#a8a8a8"/></svg>
<svg class="a" style="left:689px;top:81px;" width="13" height="13" viewBox="0 0 13 13"><path d="M0.5 1H12.5" stroke="#a8a8a8" stroke-width="1.2"/><rect x="2" y="2" width="3.5" height="10" fill="#a8a8a8"/><rect x="7" y="2" width="3.5" height="5" fill="#a8a8a8"/></svg>
<svg class="a" style="left:715px;top:81px;" width="13" height="13" viewBox="0 0 13 13"><path d="M0.5 6.5H12.5" stroke="#a8a8a8" stroke-width="1.2"/><rect x="2.5" y="2" width="3.5" height="9" fill="#a8a8a8"/><rect x="7.5" y="4" width="3.5" height="5" fill="#a8a8a8"/></svg>
<svg class="a" style="left:742px;top:81px;" width="13" height="13" viewBox="0 0 13 13"><path d="M0.5 12H12.5" stroke="#a8a8a8" stroke-width="1.2"/><rect x="2.5" y="1" width="3.5" height="10" fill="#a8a8a8"/><rect x="7.5" y="6" width="3.5" height="5" fill="#a8a8a8"/></svg>
<div class="a" style="left:606px;top:104px;width:152px;height:1px;background:#303030;"></div>
<div class="t" style="transform:scaleX(0.928);left:606px;top:113.85px;font-size:9px;color:#c0c0c0;">Distribute Layers:</div>
<div class="a" style="left:602px;top:122px;width:171px;height:1px;background:#1f1f1f;"></div>
<div class="a" style="left:602px;top:127px;width:171px;height:251px;background:#1f1f1f;"></div>
<div class="t" style="transform:scaleX(0.940);left:611px;top:132.23px;font-size:9.5px;color:#d0d0d0;">Motion Tools</div>
<svg class="a" style="left:669px;top:134px;" width="7" height="7" viewBox="0 0 7 7"><path d="M0 0.75H7M0 3.5H7M0 6.25H7" stroke="#9a9a9a" stroke-width="1.2"/></svg>
<div class="a" style="left:603px;top:146px;width:169px;height:232px;border:1px solid #2c2c2c;border-bottom:none;border-radius:4px 4px 0 0;"></div>
<div class="t" style="transform:scaleX(1.031);left:609.5px;top:152.85px;font-size:9px;color:#8a5cf6;font-weight:bold;">MOTION TOOLS</div>
<div class="t" style="transform:scaleX(1.038);left:609.5px;top:161.85px;font-size:9px;color:#8a5cf6;font-weight:bold;">CLASSIC</div>
<div class="a" style="left:723.5px;top:150px;width:41px;height:21px;background:#141414;border:1px solid #2a2a2a;border-radius:4px;"></div>
<div class="t" style="transform:scaleX(0.919);left:729.5px;top:156.85px;font-size:9px;color:#d8d8d8;">Get Pro</div>
<div class="a" style="left:606.3px;top:174px;width:158.7px;height:60.6px;border:1px solid #2c2c2c;border-radius:4px;"></div>
<svg class="a" style="left:616px;top:182px;" width="6" height="9" viewBox="0 0 6 9"><path d="M5 0.8L1.2 4.5L5 8.2" stroke="#777" stroke-width="1" fill="none"/></svg>
<div class="a" style="left:647px;top:186.0px;width:48px;height:1px;background:#5a5a5a;"></div>
<svg class="a" style="left:632px;top:180.5px;" width="12" height="12" viewBox="0 0 12 12"><circle cx="6" cy="6" r="4.6" fill="#1f1f1f" stroke="#cfcfcf" stroke-width="1.6"/></svg>
<div class="a" style="left:708.7px;top:179.5px;width:29.5px;height:14px;background:#0c0c0c;border:1px solid #222;border-radius:3px;"></div>
<div class="t" style="left:715px;top:182.97px;font-size:8.5px;color:#d8d8d8;">0.1</div>
<div class="a" style="left:744px;top:179.5px;width:15px;height:14px;background:#1a1a1a;border-radius:3px;"></div>
<div class="a" style="left:747px;top:182.0px;width:10px;height:9px;background:#e85555;border-radius:2px;"></div>
<svg class="a" style="left:616px;top:200px;" width="6" height="9" viewBox="0 0 6 9"><path d="M1 0.8L4.8 4.5L1 8.2" stroke="#777" stroke-width="1" fill="none"/></svg>
<div class="a" style="left:641px;top:203.7px;width:40px;height:1px;background:#5a5a5a;"></div>
<svg class="a" style="left:683.4px;top:198.2px;" width="12" height="12" viewBox="0 0 12 12"><circle cx="6" cy="6" r="4.6" fill="#1f1f1f" stroke="#cfcfcf" stroke-width="1.6"/></svg>
<div class="a" style="left:708.7px;top:197.2px;width:29.5px;height:14px;background:#0c0c0c;border:1px solid #222;border-radius:3px;"></div>
<div class="t" style="left:715px;top:200.97px;font-size:8.5px;color:#d8d8d8;">94</div>
<div class="a" style="left:744px;top:197.2px;width:15px;height:14px;background:#1a1a1a;border-radius:3px;"></div>
<svg class="a" style="left:747px;top:199.2px;" width="10" height="10" viewBox="0 0 10 10"><path d="M5 0.5L9.5 5L5 9.5L0.5 5Z" fill="none" stroke="#e85555" stroke-width="1.2"/><path d="M5 0.5L0.5 5L5 9.5Z" fill="#e85555"/></svg>
<svg class="a" style="left:614px;top:217px;" width="10" height="10" viewBox="0 0 10 10"><path d="M0.8 0.8L9.2 9.2M9.2 0.8L0.8 9.2" stroke="#777" stroke-width="1" fill="none"/></svg>
<div class="a" style="left:647px;top:222.0px;width:48px;height:1px;background:#5a5a5a;"></div>
<svg class="a" style="left:632px;top:216.5px;" width="12" height="12" viewBox="0 0 12 12"><circle cx="6" cy="6" r="4.6" fill="#1f1f1f" stroke="#cfcfcf" stroke-width="1.6"/></svg>
<div class="a" style="left:708.7px;top:215.5px;width:29.5px;height:14px;background:#0c0c0c;border:1px solid #222;border-radius:3px;"></div>
<div class="t" style="left:715px;top:218.97px;font-size:8.5px;color:#d8d8d8;">0.1</div>
<div class="a" style="left:744px;top:215.5px;width:15px;height:14px;background:#1a1a1a;border-radius:3px;"></div>
<svg class="a" style="left:747px;top:217.5px;" width="10" height="10" viewBox="0 0 10 10"><circle cx="5" cy="5" r="4.6" fill="#e85555"/></svg>
<div class="a" style="left:606.3px;top:237.5px;width:77.7px;height:83.2px;border:1px solid #2c2c2c;border-radius:4px;"></div>
<div class="a" style="left:614px;top:247.4px;width:18.2px;height:18.2px;background:#8a5cf6;"></div>
<div class="a" style="left:635.7px;top:247.4px;width:18.2px;height:18.2px;background:#8a5cf6;"></div>
<div class="a" style="left:657.9px;top:247.4px;width:18.2px;height:18.2px;background:#8a5cf6;"></div>
<div class="a" style="left:614px;top:269.4px;width:18.2px;height:18.2px;background:#8a5cf6;"></div>
<div class="a" style="left:635.7px;top:269.4px;width:18.2px;height:18.2px;background:#8a5cf6;"></div>
<div class="a" style="left:657.9px;top:269.4px;width:18.2px;height:18.2px;background:#8a5cf6;"></div>
<div class="a" style="left:614px;top:291.0px;width:18.2px;height:18.2px;background:#8a5cf6;"></div>
<div class="a" style="left:635.7px;top:291.0px;width:18.2px;height:18.2px;background:#8a5cf6;"></div>
<div class="a" style="left:657.9px;top:291.0px;width:18.2px;height:18.2px;background:#8a5cf6;"></div>
<svg class="a" style="left:614px;top:247.4px;" width="62" height="62.2" viewBox="0 0 62 62.2">
<path d="M0 0H14V3.6H3.6V14H0Z" fill="#d2bfff"/>
<rect x="21.7" y="0" width="18.5" height="3.6" fill="#d2bfff"/>
<path d="M62 0H48V3.6H58.4V14H62Z" fill="#d2bfff"/>
<rect x="0" y="22.1" width="3.6" height="18.1" fill="#d2bfff"/>
<rect x="23.5" y="23.9" width="14.9" height="14.5" fill="none" stroke="#d2bfff" stroke-width="3.6"/>
<rect x="58.4" y="22.1" width="3.6" height="18.1" fill="#d2bfff"/>
<path d="M0 62.2H14V58.6H3.6V48.2H0Z" fill="#d2bfff"/>
<rect x="21.7" y="58.6" width="18.5" height="3.6" fill="#d2bfff"/>
<path d="M62 62.2H48V58.6H58.4V48.2H62Z" fill="#d2bfff"/>
</svg>
<div class="a" style="left:687.2px;top:237.5px;width:77.2px;height:20.5px;background:#1b1b1b;border:1px solid #2e2e2e;border-radius:4px;"></div>
<div class="t" style="transform:scaleX(0.968);left:701px;top:246.25px;font-size:7px;color:#d8d8d8;font-weight:bold;">ELASTIC</div>
<svg class="a" style="left:734px;top:240px;" width="15" height="14" viewBox="0 0 15 14"><path d="M1 3C1 12 4 12 4 6C4 2 5.5 2 6 8C6.5 12 8 12 8.5 6C9 3 11 2 12.5 5" stroke="#d0d0d0" stroke-width="1" fill="none"/><circle cx="13" cy="5" r="1.4" fill="#ddd"/></svg>
<div class="a" style="left:687.2px;top:261.8px;width:77.2px;height:20.8px;background:#1b1b1b;border:1px solid #2e2e2e;border-radius:4px;"></div>
<div class="t" style="transform:scaleX(0.923);left:702px;top:270.25px;font-size:7px;color:#d8d8d8;font-weight:bold;">BOUNCE</div>
<svg class="a" style="left:734px;top:264px;" width="15" height="13" viewBox="0 0 15 13"><path d="M1 11C1 3 3 3 4 11C4.5 6 6 6 7 11C7.5 9 8.5 9 9.5 11" stroke="#d0d0d0" stroke-width="1" fill="none"/><circle cx="11" cy="11" r="1.4" fill="#ddd"/></svg>
<div class="a" style="left:687.2px;top:286.4px;width:77.2px;height:20.8px;background:#1b1b1b;border:1px solid #2e2e2e;border-radius:4px;"></div>
<div class="t" style="transform:scaleX(0.939);left:701px;top:294.25px;font-size:7px;color:#d8d8d8;font-weight:bold;">CLONE</div>
<svg class="a" style="left:728px;top:293px;" width="21" height="6" viewBox="0 0 21 6"><path d="M3 0.5L5.5 3L3 5.5L0.5 3Z" fill="#ddd"/><path d="M8 0.5L10.5 3L8 5.5L5.5 3Z" fill="#ddd"/><path d="M13 0.8L15.2 3L13 5.2L10.8 3Z" fill="none" stroke="#ccc" stroke-width="0.8"/><path d="M18 0.8L20.2 3L18 5.2L15.8 3Z" fill="none" stroke="#ccc" stroke-width="0.8"/></svg>
<div class="t" style="transform:scaleX(0.988);left:716px;top:313.93px;font-size:7.5px;color:#c0c0c0;">offset</div>
<div class="t" style="transform:scaleX(0.987);left:743px;top:313.93px;font-size:7.5px;color:#c0c0c0;">step</div>
<div class="a" style="left:606.3px;top:324.7px;width:53px;height:20.6px;background:#1b1b1b;border:1px solid #2e2e2e;border-radius:4px;"></div>
<div class="t" style="transform:scaleX(0.967);left:613px;top:332.25px;font-size:7px;color:#d8d8d8;font-weight:bold;">SEQUENCE</div>
<div class="a" style="left:662.4px;top:324.7px;width:21.2px;height:20.6px;background:#1b1b1b;border:1px solid #2e2e2e;border-radius:4px;"></div>
<svg class="a" style="left:665px;top:326px;" width="17" height="17" viewBox="0 0 17 17"><path d="M5.5 1H9.5L7.5 3Z" fill="#ddd"/><path d="M7.5 3V6" stroke="#ddd" stroke-width="0.8"/><rect x="8" y="6" width="7" height="2.2" fill="#ddd"/><rect x="5" y="9" width="7" height="2.2" fill="#ddd"/><rect x="2" y="12" width="7" height="2.2" fill="#ddd"/><rect x="1" y="14.5" width="11" height="1" fill="#888"/></svg>
<div class="a" style="left:686.7px;top:324.7px;width:21.2px;height:20.6px;background:#1b1b1b;border:1px solid #2e2e2e;border-radius:4px;"></div>
<svg class="a" style="left:689px;top:327px;" width="17" height="15" viewBox="0 0 17 15"><rect x="9" y="2" width="7" height="2.2" fill="#ddd"/><rect x="6" y="5.5" width="7" height="2.2" fill="#ddd"/><rect x="3" y="9" width="7" height="2.2" fill="#ddd"/><rect x="0.5" y="12.5" width="7" height="2.2" fill="#ddd"/></svg>
<div class="a" style="left:711px;top:324.7px;width:53.5px;height:20.6px;background:#1b1b1b;border:1px solid #2e2e2e;border-radius:4px;"></div>
<div class="a" style="left:714.5px;top:328px;width:21.1px;height:14px;background:#0e0e0e;border-radius:3px;"></div>
<div class="t" style="left:721.5px;top:331.97px;font-size:8.5px;color:#d8d8d8;">6</div>
<div class="a" style="left:739.3px;top:328px;width:21.2px;height:14px;background:#0e0e0e;border-radius:3px;"></div>
<div class="t" style="left:745.5px;top:331.97px;font-size:8.5px;color:#d8d8d8;">1</div>
<div class="a" style="left:606.3px;top:348.5px;width:53px;height:20.5px;background:#1b1b1b;border:1px solid #2e2e2e;border-radius:4px;"></div>
<div class="t" style="transform:scaleX(0.953);left:617.5px;top:356.25px;font-size:7px;color:#d8d8d8;font-weight:bold;">EXTRACT</div>
<div class="a" style="left:662.4px;top:348.5px;width:45.6px;height:20.5px;background:#1b1b1b;border:1px solid #2e2e2e;border-radius:4px;"></div>
<div class="t" style="transform:scaleX(0.974);left:672.5px;top:356.25px;font-size:7px;color:#d8d8d8;font-weight:bold;">MERGE</div>
<div class="a" style="left:711px;top:348.5px;width:53.5px;height:20.5px;background:#1b1b1b;border:1px solid #2e2e2e;border-radius:4px;"></div>
<div class="t" style="transform:scaleX(0.964);left:719.5px;top:356.25px;font-size:7px;color:#d8d8d8;font-weight:bold;">ADD NULL</div>
<div class="a" style="left:606.3px;top:373px;width:77px;height:10px;background:#1b1b1b;border:1px solid #2e2e2e;border-radius:4px;"></div>
<div class="a" style="left:687.2px;top:373px;width:77.2px;height:10px;background:#1b1b1b;border:1px solid #2e2e2e;border-radius:4px;"></div>
<div class="a" style="left:602px;top:378px;width:171px;height:3px;background:#000;"></div>
<div class="a" style="left:777px;top:29px;width:52px;height:349px;background:#1f1f1f;"></div>
<div class="t" style="transform:scaleX(0.879);left:786.5px;top:33.22px;font-size:9.5px;color:#d0d0d0;">Presetify</div>
<svg class="a" style="left:826px;top:35px;" width="2" height="9" viewBox="0 0 2 9"><rect x="0" y="0" width="2" height="2" fill="#888"/><rect x="0" y="3.5" width="2" height="2" fill="#888"/><rect x="0" y="7" width="2" height="2" fill="#888"/></svg>
<div class="a" style="left:778px;top:47.6px;width:50px;height:328.5px;border:1px solid #2a2a2a;border-radius:4px;"></div>
<div class="a" style="left:791.4px;top:61.4px;width:30.4px;height:30px;border:1.6px solid #505050;border-radius:8px;"></div>
<div class="a" style="left:798px;top:68.0px;width:18.8px;height:18.2px;background:#2e2e2e;border-radius:4px;"></div>
<div class="a" style="left:791.4px;top:96.3px;width:30.4px;height:30px;border:1.6px solid #505050;border-radius:8px;"></div>
<div class="a" style="left:798px;top:102.89999999999999px;width:18.8px;height:18.2px;background:#2e2e2e;border-radius:4px;"></div>
<div class="a" style="left:791.4px;top:131.5px;width:30.4px;height:30px;border:1.6px solid #505050;border-radius:8px;"></div>
<div class="a" style="left:798px;top:138.1px;width:18.8px;height:18.2px;background:#2e2e2e;border-radius:4px;"></div>
<div class="a" style="left:791.4px;top:166.5px;width:30.4px;height:30px;border:1.6px solid #505050;border-radius:8px;"></div>
<div class="a" style="left:798px;top:173.1px;width:18.8px;height:18.2px;background:#2e2e2e;border-radius:4px;"></div>
<div class="a" style="left:791.4px;top:201.7px;width:30.4px;height:30px;border:1.6px solid #505050;border-radius:8px;"></div>
<div class="a" style="left:798px;top:208.29999999999998px;width:18.8px;height:18.2px;background:#2e2e2e;border-radius:4px;"></div>
<div class="a" style="left:791.4px;top:237.5px;width:30.4px;height:30px;border:1.6px solid #505050;border-radius:8px;"></div>
<div class="a" style="left:798px;top:244.1px;width:18.8px;height:18.2px;background:#2e2e2e;border-radius:4px;"></div>
<div class="a" style="left:791.4px;top:272.6px;width:30.4px;height:30px;border:1.6px solid #505050;border-radius:8px;"></div>
<div class="a" style="left:798px;top:279.20000000000005px;width:18.8px;height:18.2px;background:#2e2e2e;border-radius:4px;"></div>
<div class="t" style="transform:scaleX(0.999);left:800.5px;top:73.85px;font-size:9px;color:#e0e0e0;">1-1</div>
<svg class="a" style="left:801px;top:105.3px;" width="11" height="12" viewBox="0 0 11 12"><path d="M5.5 0.5L10.5 5H0.5Z M5.5 11.5L10.5 7H0.5Z" fill="#f0f0f0"/></svg>
<div class="t" style="transform:scaleX(0.923);left:803px;top:139.85px;font-size:9px;color:#e8e8e8;">C</div>
<svg class="a" style="left:803.5px;top:147.5px;" width="6" height="7" viewBox="0 0 6 7"><path d="M3 6.5V1M0.8 3L3 0.8L5.2 3" stroke="#e8e8e8" stroke-width="1.1" fill="none"/></svg>
<div class="t" style="transform:scaleX(0.923);left:803px;top:174.85px;font-size:9px;color:#e8e8e8;">C</div>
<svg class="a" style="left:803px;top:183.5px;" width="7" height="5" viewBox="0 0 7 5"><path d="M6.5 2.5H1M3 0.5L1 2.5L3 4.5" stroke="#e8e8e8" stroke-width="1.1" fill="none"/></svg>
<div class="t" style="transform:scaleX(1.059);left:801.5px;top:245.85px;font-size:9px;color:#e8e8e8;">W</div>
<svg class="a" style="left:803.5px;top:253.5px;" width="6" height="7" viewBox="0 0 6 7"><path d="M3 6.5V1M0.8 3L3 0.8L5.2 3" stroke="#e8e8e8" stroke-width="1.1" fill="none"/></svg>
<div class="t" style="transform:scaleX(1.059);left:801.5px;top:280.85px;font-size:9px;color:#e8e8e8;">W</div>
<svg class="a" style="left:803px;top:289.6px;" width="7" height="5" viewBox="0 0 7 5"><path d="M6.5 2.5H1M3 0.5L1 2.5L3 4.5" stroke="#e8e8e8" stroke-width="1.1" fill="none"/></svg>
<svg class="a" style="left:803px;top:210.7px;" width="8" height="13" viewBox="0 0 8 13"><path d="M5.5 0.5L0.8 7.2H4L2.5 12.5L7.2 5.5H4Z" fill="#f0f0f0"/></svg>
<div class="t" style="transform:scaleX(0.914);left:791.2px;top:313.85px;font-size:9px;color:#c8c8c8;">Presetify</div>
<div class="a" style="left:826px;top:314px;width:1px;height:8px;background:#444;"></div>
<div class="a" style="left:833px;top:29px;width:28px;height:569px;background:#1f1f1f;"></div>
<svg class="a" style="left:841.5px;top:35.5px;" width="4" height="4" viewBox="0 0 4 4"><path d="M0.3 0.3L3.7 3.7M3.7 0.3L0.3 3.7" stroke="#aaa" stroke-width="0.9"/></svg>
<div class="a" style="left:853px;top:33.8px;width:7.5px;height:7.2px;background:#b0b0dc;"></div>
<div class="a" style="left:836.8px;top:304px;width:19.3px;height:19.5px;background:#000;"></div>
<div class="a" style="left:833px;top:581px;width:28px;height:1px;background:#141414;"></div>
<div class="a" style="left:864px;top:29px;width:336px;height:569px;background:#1f1f1f;"></div>
<svg class="a" style="left:873.5px;top:35.5px;" width="4" height="4" viewBox="0 0 4 4"><path d="M0.3 0.3L3.7 3.7M3.7 0.3L0.3 3.7" stroke="#aaa" stroke-width="0.9"/></svg>
<div class="a" style="left:884px;top:33.5px;width:7.5px;height:7.5px;background:#b5a17f;"></div>
<svg class="a" style="left:901px;top:34px;" width="6" height="8" viewBox="0 0 6 8"><rect x="0.5" y="3.5" width="5" height="4" fill="#aaa"/><path d="M1.5 3.5V2A1.5 1.5 0 0 1 4.5 2" stroke="#aaa" stroke-width="1" fill="none"/></svg>
<div class="t" style="transform:scaleX(0.927);left:915px;top:34.85px;font-size:9px;color:#d0d0d0;">Composition 27 Jan 2nd</div>
<svg class="a" style="left:1014px;top:36px;" width="7" height="7" viewBox="0 0 7 7"><path d="M0 0.75H7M0 3.5H7M0 6.25H7" stroke="#9a9a9a" stroke-width="1.2"/></svg>
<div class="a" style="left:872px;top:45.5px;width:148.5px;height:2px;background:#d4d4d4;border-radius:1px;"></div>
<div class="t" style="transform:scaleX(0.893);left:1038.7px;top:34.85px;font-size:9px;color:#c0c0c0;">Brushes</div>
<div class="t" style="transform:scaleX(0.950);left:1101px;top:34.85px;font-size:9px;color:#c0c0c0;">Paint</div>
<div class="t" style="transform:scaleX(0.896);left:1163.5px;top:34.85px;font-size:9px;color:#c0c0c0;">Laye</div>
<div class="a" style="left:1182px;top:34px;width:1px;height:10px;background:#aaa;"></div>
<svg class="a" style="left:1190px;top:36px;" width="8" height="8" viewBox="0 0 8 8"><path d="M0.8 0.8L3.8 3.8L0.8 6.8M4.2 0.8L7.2 3.8L4.2 6.8" stroke="#d0d0d0" stroke-width="1.3" fill="none"/></svg>
<div class="a" style="left:879px;top:54px;width:66px;height:18.5px;background:#474747;border-radius:4px;"></div>
<div class="t" style="transform:scaleX(0.898);left:887px;top:58.85px;font-size:9px;color:#d8d8d8;">27 Jan 2nd</div>
<svg class="a" style="left:937px;top:59px;" width="5" height="8" viewBox="0 0 5 8"><path d="M4 0.8L1.2 4L4 7.2" stroke="#ccc" stroke-width="1.2" fill="none"/></svg>
<div class="t" style="transform:scaleX(0.903);left:952px;top:58.85px;font-size:9px;color:#c0c0c0;">sceane 3</div>
<div class="a" style="left:864px;top:78px;width:336px;height:1.5px;background:#141414;"></div>
<div class="a" style="left:893px;top:81px;width:278px;height:495px;background:#f2f2f2;"></div>
<div class="t" style="transform:scaleX(0.948);left:871px;top:86.85px;font-size:9px;color:#d4d4d4;clip-path:inset(0 calc(100% - 22px) 0 0);">Active Camera (Default)</div>
<div class="t" style="transform:scaleX(0.948);left:871px;top:86.85px;font-size:9px;color:#8a8a8a;clip-path:inset(0 0 0 22px);">Active Camera (Default)</div>
<svg class="a" style="left:916px;top:96px;" width="17" height="9" viewBox="0 0 17 9"><path d="M16.5 4.5H1.5M5 1L1.2 4.5L5 8" stroke="#555" stroke-width="0.9" fill="none"/></svg>
<div class="t" style="transform:scaleX(0.929);left:938px;top:93.83px;font-size:13.5px;color:#222;">New post</div>
<svg class="a" style="left:966px;top:121px;" width="131" height="233" viewBox="0 0 131 233">
<defs>
<clipPath id="pc"><rect x="0" y="0" width="131" height="233" rx="17" ry="17"/></clipPath>
<filter id="b3" x="-30%" y="-30%" width="160%" height="160%"><feGaussianBlur stdDeviation="3"/></filter>
<filter id="b6" x="-30%" y="-30%" width="160%" height="160%"><feGaussianBlur stdDeviation="5"/></filter>
<filter id="b15" x="-30%" y="-30%" width="160%" height="160%"><feGaussianBlur stdDeviation="1.4"/></filter>
<filter id="b08" x="-30%" y="-30%" width="160%" height="160%"><feGaussianBlur stdDeviation="0.8"/></filter>
<linearGradient id="face" x1="0" y1="0" x2="1" y2="0.2"><stop offset="0" stop-color="#e8b688"/><stop offset="0.3" stop-color="#f0c498"/><stop offset="0.65" stop-color="#d09a6c"/><stop offset="1" stop-color="#9a6440"/></linearGradient>
<linearGradient id="neck" x1="0" y1="0" x2="1" y2="0"><stop offset="0" stop-color="#d8a47a"/><stop offset="0.55" stop-color="#e0b088"/><stop offset="1" stop-color="#8a5a3a"/></linearGradient>
</defs>
<g clip-path="url(#pc)">
<rect x="0" y="0" width="131" height="233" fill="#3c2a16"/>
<g filter="url(#b6)">
<rect x="-5" y="45" width="32" height="75" fill="#b88a50"/>
<rect x="0" y="0" width="70" height="22" fill="#4a3c28"/>
<rect x="102" y="22" width="34" height="90" fill="#624824"/>
<rect x="0" y="118" width="131" height="20" fill="#5a3c1e"/>
</g>
<circle cx="121" cy="6" r="6" fill="#d8b060" filter="url(#b3)"/>
<path d="M106 34 Q122 40 131 58" stroke="#9a8262" stroke-width="4" fill="none" filter="url(#b15)"/>
<g filter="url(#b3)">
<path d="M-5 100 L22 88 L34 122 L46 168 L50 240 L-5 240Z" fill="#15100b"/>
<path d="M136 96 L110 88 L100 125 L94 168 L92 240 L136 240Z" fill="#130d09"/>
<rect x="46" y="172" width="48" height="70" fill="#0a0706"/>
</g>
<g filter="url(#b15)">
<path d="M42 128 L96 126 L95 160 L71 184 L47 162Z" fill="url(#neck)"/>
</g>
<g filter="url(#b15)">
<path d="M34 58 Q40 52 52 52 L92 52 Q104 56 105 66 L106 100 Q104 118 97 130 Q88 143 76 146 L64 146 Q52 142 45 132 Q36 120 33 104 L30 80Z" fill="url(#face)"/>
<ellipse cx="28" cy="96" rx="5" ry="11" fill="#c88a60"/>
<ellipse cx="106" cy="97" rx="5" ry="11" fill="#a86a48"/>
</g>
<g filter="url(#b3)">
<ellipse cx="60" cy="104" rx="8" ry="15" fill="#6a3820" opacity="0.75"/>
<path d="M88 70 Q106 90 103 114 Q96 134 80 140 Q94 112 86 74Z" fill="#8c5a3a" opacity="0.45"/>
<ellipse cx="68" cy="132" rx="14" ry="6" fill="#a06040" opacity="0.35"/>
</g>
<g filter="url(#b08)">
<path d="M40 82 Q50 78 60 82 M76 81 Q87 77 97 80" stroke="#4a2a14" stroke-width="2" fill="none"/>
<ellipse cx="51" cy="89" rx="3.5" ry="1.8" fill="#2a1408"/>
<ellipse cx="85" cy="88" rx="3.5" ry="1.8" fill="#2a1408"/>
<path d="M60 119 Q70 115 80 119 Q70 123 60 119Z" fill="#a85848"/>
</g>
<g filter="url(#b15)">
<path d="M19 88 Q12 60 20 42 Q34 22 60 18 Q92 16 108 32 Q117 50 113 72 L107 92 Q104 74 99 64 Q92 58 84 62 Q78 56 70 60 Q60 56 52 62 Q44 60 40 66 Q35 74 34 88 Q28 94 19 88Z" fill="#2a1a0e"/>
<path d="M50 60 Q56 70 54 76" stroke="#2a1a0e" stroke-width="3" fill="none"/>
<path d="M30 44 Q44 30 58 34 M66 26 Q84 22 98 34" stroke="#40281a" stroke-width="3" fill="none"/>
</g>
<g filter="url(#b08)">
<path d="M-2 200 Q8 190 18 186 L33 179 Q39 177 39 183 Q38 188 30 192 L24 197 Q36 197 43 204 Q46 214 44 224 Q40 233 28 236 L-2 236Z" fill="#d49c6c"/>
<path d="M4 206 Q18 200 32 205 M6 216 Q20 211 36 216 M10 226 Q22 222 34 227" stroke="#7a4a2e" stroke-width="1.3" fill="none" opacity="0.8"/>
<path d="M8 192 L32 181" stroke="#f0c898" stroke-width="2.2"/>
</g>
</g>
</svg>
<div class="a" style="left:893px;top:366px;width:278px;height:1px;background:#9a9a9a;"></div>
<div class="a" style="left:905px;top:376px;width:249.3px;height:43.2px;background:#d3d3d3;border-radius:5px;"></div>
<div class="t" style="transform:scaleX(0.868);left:914.5px;top:382.20px;font-size:14px;color:#a0a0a0;">Write a caption...</div>
<div class="t" style="transform:scaleX(0.887);left:914.5px;top:435.20px;font-size:14px;color:#2a2a2a;">Hashtags</div>
<svg class="a" style="left:1147px;top:438px;" width="6" height="9" viewBox="0 0 6 9"><path d="M1 0.8L4.8 4.5L1 8.2" stroke="#666" stroke-width="1" fill="none"/></svg>
<div class="t" style="transform:scaleX(0.883);left:914.5px;top:459.20px;font-size:14px;color:#2a2a2a;">Tag people</div>
<svg class="a" style="left:1147px;top:462px;" width="6" height="9" viewBox="0 0 6 9"><path d="M1 0.8L4.8 4.5L1 8.2" stroke="#666" stroke-width="1" fill="none"/></svg>
<div class="t" style="transform:scaleX(0.889);left:914.5px;top:485.20px;font-size:14px;color:#2a2a2a;">Add location</div>
<svg class="a" style="left:1147px;top:488px;" width="6" height="9" viewBox="0 0 6 9"><path d="M1 0.8L4.8 4.5L1 8.2" stroke="#666" stroke-width="1" fill="none"/></svg>
<div class="a" style="left:917.4px;top:523.6px;width:106.3px;height:34px;background:#d0d0d0;border-radius:6px;"></div>
<div class="t" style="transform:scaleX(0.873);left:943.3px;top:532.20px;font-size:14px;color:#7c7c7c;">Save draft</div>
<div class="a" style="left:1031.7px;top:523.6px;width:106.6px;height:34px;background:#0a1ed6;border-radius:6px;"></div>
<div class="t" style="transform:scaleX(0.873);left:1072px;top:532.20px;font-size:14px;color:#ffffff;">Share</div>
<div class="a" style="left:1035px;top:79px;width:1px;height:497px;background:#3cc0d0;opacity:0.5;"></div>
<div class="a" style="left:864px;top:481px;width:336px;height:1px;background:#3cc0d0;opacity:0.5;"></div>
<div class="a" style="left:1174px;top:79px;width:1px;height:412px;background:#4a5858;"></div>
<svg class="a" style="left:1086px;top:535px;" width="22" height="24" viewBox="0 0 22 24"><path d="M6 2.5Q6 0.8 7.8 0.8Q9.5 0.8 9.5 2.5V10Q10 8.3 11.5 8.5Q13 8.7 13 10.5Q13.5 9 15 9.3Q16.5 9.6 16.5 11.5Q17 10.3 18.3 10.6Q19.6 11 19.5 13V17Q19.5 21 16 23H8.5Q6.5 21 4 17L1.5 13Q0.8 11.5 2.2 11Q3.5 10.6 4.8 12.5L6 14Z" fill="#fff" stroke="#111" stroke-width="1.2"/><path d="M11 16V20M13.5 16V20M16 16V20" stroke="#111" stroke-width="1"/></svg>
<svg class="a" style="left:894px;top:504px;" width="46" height="50" viewBox="0 0 46 50"><path d="M8 37V10" stroke="#30c040" stroke-width="1.2"/><path d="M8 6L5.5 12H10.5Z" fill="#30c040"/><path d="M8 37H34" stroke="#e04040" stroke-width="1.2"/><path d="M37 37L31 34.5V39.5Z" fill="#e04040"/><circle cx="8" cy="37" r="1.6" fill="#3050e0"/><text x="1" y="8" font-size="7" fill="#30c040" font-family="Liberation Sans">Y</text><text x="12" y="35" font-size="7" fill="#4060e0" font-family="Liberation Sans">Z</text><text x="38" y="47" font-size="7" fill="#e04040" font-family="Liberation Sans">X</text></svg>
<div class="a" style="left:864px;top:579px;width:336px;height:1px;background:#141414;"></div>
<div class="t" style="transform:scaleX(0.941);left:886px;top:586.85px;font-size:9px;color:#4b93e8;">41.2</div>
<div class="t" style="transform:scaleX(0.873);left:907px;top:586.85px;font-size:9px;color:#bbb;">%</div>
<div class="a" style="left:926.6px;top:583px;width:14px;height:14px;background:#000;border-radius:3px;"></div>
<svg class="a" style="left:929.5px;top:588px;" width="8" height="5" viewBox="0 0 8 5"><path d="M0.8 0.8L4.0 4.2L7.2 0.8" stroke="#ddd" stroke-width="1.5" fill="none"/></svg>
<div class="a" style="left:948px;top:583px;width:1px;height:13px;background:#333;"></div>
<div class="a" style="left:956.3px;top:582.5px;width:68.7px;height:15px;background:#000;border-radius:3px;"></div>
<div class="t" style="transform:scaleX(1.097);left:962.5px;top:586.85px;font-size:9px;color:#d0d0d0;">Third</div>
<svg class="a" style="left:1012px;top:588px;" width="8" height="5" viewBox="0 0 8 5"><path d="M0.8 0.8L4.0 4.2L7.2 0.8" stroke="#ddd" stroke-width="1.5" fill="none"/></svg>
<div class="a" style="left:1033px;top:583px;width:1px;height:13px;background:#333;"></div>
<svg class="a" style="left:1041px;top:583px;" width="10" height="12" viewBox="0 0 10 12"><rect x="0.5" y="1.5" width="9" height="8" fill="none" stroke="#aaa" stroke-width="1"/><path d="M5.5 2.5L3 6H5L4 9L7 5H5Z" fill="#aaa"/><path d="M6 11L8 10" stroke="#aaa"/></svg>
<svg class="a" style="left:1060px;top:584px;" width="10" height="10" viewBox="0 0 10 10"><rect x="0.5" y="0.5" width="9" height="9" fill="none" stroke="#aaa" stroke-width="1"/><path d="M2 2H4V4H2ZM6 2H8V4H6ZM4 4H6V6H4ZM2 6H4V8H2ZM6 6H8V8H6Z" fill="#aaa"/></svg>
<div class="a" style="left:1076px;top:581px;width:18px;height:17px;background:#3a3a3a;border-radius:3px;"></div>
<svg class="a" style="left:1078px;top:584px;" width="14" height="11" viewBox="0 0 14 11"><path d="M3 1.5H12.5V9.5H1.5Z" fill="none" stroke="#ccc" stroke-width="1.1"/><rect x="1.5" y="0.5" width="2" height="2" fill="#ccc"/><rect x="11" y="8.5" width="2.5" height="2.5" fill="#ccc"/></svg>
<svg class="a" style="left:1102px;top:584px;" width="10" height="10" viewBox="0 0 10 10"><rect x="0.5" y="0.5" width="9" height="9" fill="none" stroke="#aaa" stroke-width="1"/><rect x="2.5" y="3" width="5" height="4" fill="#aaa"/></svg>
<svg class="a" style="left:1117px;top:583px;" width="11" height="13" viewBox="0 0 11 13"><rect x="0.5" y="1.5" width="10" height="8" fill="none" stroke="#aaa" stroke-width="1"/><path d="M5.5 0V11M0 5.5H11" stroke="#aaa" stroke-width="0.8"/><path d="M4 11.5H7L5.5 13Z" fill="#aaa"/></svg>
<div class="a" style="left:1137px;top:583px;width:1px;height:13px;background:#333;"></div>
<svg class="a" style="left:1151px;top:583px;" width="11" height="13" viewBox="0 0 11 13"><circle cx="6" cy="3.5" r="2.5" fill="#e03030"/><circle cx="3.5" cy="7.5" r="2.5" fill="#30b040"/><circle cx="7.5" cy="7.5" r="2.5" fill="#3070e0"/><path d="M8.5 2L10.5 2M9.5 1V3" stroke="#ddd" stroke-width="0.8"/><path d="M4 11.5H7L5.5 13Z" fill="#aaa"/></svg>
<svg class="a" style="left:1168px;top:584px;" width="10" height="10" viewBox="0 0 10 10"><circle cx="5" cy="5" r="4.3" fill="none" stroke="#aaa" stroke-width="1.2"/><circle cx="5" cy="5" r="1.8" fill="none" stroke="#aaa" stroke-width="1"/><path d="M5 0.7V3.2M9.3 5H6.8M5 9.3V6.8M0.7 5H3.2" stroke="#aaa" stroke-width="0.9"/></svg>
<div class="t" style="transform:scaleX(1.012);left:1184px;top:586.85px;font-size:9px;color:#4b93e8;">+0.0</div>
<div class="a" style="left:0px;top:381px;width:830px;height:217px;background:#1f1f1f;"></div>
<div class="a" style="left:0px;top:381px;width:830px;height:1.5px;background:#2a5a95;"></div>
<div class="a" style="left:0px;top:381px;width:1.5px;height:217px;background:#2a5a95;"></div>
<div class="a" style="left:828px;top:381px;width:1.5px;height:217px;background:#2a5a95;"></div>
<svg class="a" style="left:9.5px;top:390.5px;" width="4" height="4" viewBox="0 0 4 4"><path d="M0.3 0.3L3.7 3.7M3.7 0.3L0.3 3.7" stroke="#aaa" stroke-width="0.9"/></svg>
<div class="a" style="left:20.5px;top:386px;width:8.5px;height:8px;background:#b5a17f;"></div>
<div class="t" style="transform:scaleX(0.898);left:37.5px;top:386.85px;font-size:9px;color:#d0d0d0;">27 Jan 2nd</div>
<svg class="a" style="left:86px;top:388px;" width="7" height="7" viewBox="0 0 7 7"><path d="M0 0.75H7M0 3.5H7M0 6.25H7" stroke="#9a9a9a" stroke-width="1.2"/></svg>
<div class="a" style="left:9.5px;top:398px;width:82.5px;height:2px;background:#d4d4d4;border-radius:1px;"></div>
<div class="a" style="left:120px;top:386px;width:8.5px;height:8px;background:#b5a17f;"></div>
<div class="t" style="transform:scaleX(0.917);left:137px;top:386.85px;font-size:9px;color:#c0c0c0;">sceane 3</div>
<div class="a" style="left:213px;top:386px;width:8.5px;height:8px;background:#b5a17f;"></div>
<div class="t" style="transform:scaleX(0.999);left:230px;top:386.85px;font-size:9px;color:#c0c0c0;">1m</div>
<div class="t" style="transform:scaleX(1.050);left:10.5px;top:404.95px;font-size:11px;color:#3d8ef0;font-weight:bold;">0:00:02:06</div>
<div class="t" style="transform:scaleX(1.029);left:9px;top:416.93px;font-size:7.5px;color:#2f7ad8;">00066 (30.00 fps)</div>
<div class="a" style="left:77.5px;top:406.7px;width:348.5px;height:14.3px;background:#0d0d0d;border-radius:4px;"></div>
<svg class="a" style="left:83px;top:409px;" width="13" height="9" viewBox="0 0 13 9"><circle cx="3.8" cy="3.8" r="2.9" fill="none" stroke="#aaa" stroke-width="1"/><path d="M5.8 5.8L8 8" stroke="#aaa" stroke-width="1.2"/><path d="M8.5 4.5L10 6L11.5 4.5" stroke="#aaa" stroke-width="0.9" fill="none"/></svg>
<svg class="a" style="left:436px;top:409px;" width="14" height="12" viewBox="0 0 14 12"><path d="M0.5 2H7M4 2V6H7M4 6V9" stroke="#c0c0c0" stroke-width="1" fill="none"/><circle cx="3" cy="2" r="1.3" fill="#c0c0c0"/><rect x="7" y="0.5" width="5" height="3" rx="1" fill="#c0c0c0"/><rect x="7" y="4.5" width="5" height="3" rx="1" fill="#c0c0c0"/><path d="M10 9.5H13L11.5 11.5Z" fill="#c0c0c0"/></svg>
<svg class="a" style="left:455px;top:408px;" width="13" height="12" viewBox="0 0 13 12"><path d="M2 6A4.5 4.5 0 0 1 11 6Z" fill="#c0c0c0"/><path d="M6.5 6V11M0.5 6.5H12.5" stroke="#c0c0c0" stroke-width="0.9"/><rect x="0.5" y="7.5" width="12" height="4" fill="#555"/></svg>
<svg class="a" style="left:474px;top:408px;" width="13" height="12" viewBox="0 0 13 12"><rect x="5" y="0.5" width="7.5" height="9" fill="none" stroke="#c0c0c0" stroke-width="1"/><rect x="2.5" y="2" width="7.5" height="9" fill="#1f1f1f" stroke="#c0c0c0" stroke-width="1"/><rect x="0.5" y="3.5" width="7" height="8" fill="#1f1f1f" stroke="#c0c0c0" stroke-width="1"/><path d="M4 7H10" stroke="#c0c0c0" stroke-width="1"/></svg>
<div class="a" style="left:491px;top:406.5px;width:16px;height:15px;background:#4a4a4a;border-radius:3px;"></div>
<svg class="a" style="left:493px;top:408px;" width="12" height="11" viewBox="0 0 12 11"><circle cx="7.5" cy="3.8" r="3.3" fill="none" stroke="#ddd" stroke-width="1.1"/><path d="M2 6.5A3.3 3.3 0 0 0 7 9.5M1 4.5A3.3 3.3 0 0 0 6 8" stroke="#ddd" stroke-width="1" fill="none"/></svg>
<svg class="a" style="left:511px;top:408px;" width="14" height="13" viewBox="0 0 14 13"><rect x="0.5" y="1.5" width="12.5" height="11" rx="1.5" fill="none" stroke="#c0c0c0" stroke-width="1"/><path d="M2.5 4C6 4 7 10 11 10" stroke="#c0c0c0" stroke-width="1" fill="none"/><path d="M3 0.5V2M6 0.5V2M9 0.5V2" stroke="#c0c0c0" stroke-width="0.8"/></svg>
<div class="a" style="left:535.5px;top:405px;width:280px;height:6px;background:#666;border-radius:3px;"></div>
<div class="a" style="left:535.5px;top:405px;width:4.5px;height:6px;background:#3a8ff0;border-radius:3px 0 0 3px;"></div>
<div class="a" style="left:811px;top:405px;width:4.5px;height:6px;background:#3a8ff0;border-radius:0 3px 3px 0;"></div>
<div class="a" style="left:560px;top:405.5px;width:1px;height:5px;background:#3a8ff0;"></div>
<div class="t" style="transform:scaleX(0.868);left:535px;top:413.80px;font-size:8px;color:#c8c8c8;">0:00s</div>
<div class="a" style="left:540.5px;top:421px;width:1px;height:5px;background:#9a9a9a;"></div>
<div class="t" style="transform:scaleX(0.969);left:579px;top:413.80px;font-size:8px;color:#c8c8c8;">05s</div>
<div class="a" style="left:585px;top:421px;width:1px;height:5px;background:#9a9a9a;"></div>
<div class="t" style="transform:scaleX(0.969);left:624px;top:413.80px;font-size:8px;color:#c8c8c8;">10s</div>
<div class="a" style="left:629.5px;top:421px;width:1px;height:5px;background:#9a9a9a;"></div>
<div class="t" style="transform:scaleX(0.969);left:668px;top:413.80px;font-size:8px;color:#c8c8c8;">15s</div>
<div class="a" style="left:674px;top:421px;width:1px;height:5px;background:#9a9a9a;"></div>
<div class="t" style="transform:scaleX(0.969);left:712px;top:413.80px;font-size:8px;color:#c8c8c8;">20s</div>
<div class="a" style="left:718px;top:421px;width:1px;height:5px;background:#9a9a9a;"></div>
<div class="t" style="transform:scaleX(0.969);left:756.5px;top:413.80px;font-size:8px;color:#c8c8c8;">25s</div>
<div class="a" style="left:762.5px;top:421px;width:1px;height:5px;background:#9a9a9a;"></div>
<div class="t" style="transform:scaleX(0.969);left:800.5px;top:413.80px;font-size:8px;color:#c8c8c8;">30s</div>
<div class="a" style="left:807px;top:421px;width:1px;height:5px;background:#9a9a9a;"></div>
<div class="a" style="left:535.5px;top:428px;width:280px;height:11px;background:#6a6a6a;border-radius:3px;"></div>
<div class="a" style="left:535.5px;top:428px;width:4.5px;height:11px;background:#3a8ff0;border-radius:3px 0 0 3px;"></div>
<div class="a" style="left:811px;top:428px;width:4.5px;height:11px;background:#3a8ff0;border-radius:0 3px 3px 0;"></div>
<div class="a" style="left:621px;top:429px;width:14px;height:8px;background:#c0c0c0;"></div>
<div class="a" style="left:630px;top:429px;width:15px;height:8px;background:#d0d0d0;"></div>
<div class="t" style="left:634.5px;top:429.80px;font-size:8px;color:#333;">2</div>
<div class="a" style="left:645px;top:429px;width:13px;height:8px;background:#c8c8c8;"></div>
<div class="t" style="left:649px;top:429.80px;font-size:8px;color:#333;">3</div>
<svg class="a" style="left:618px;top:433px;" width="30" height="6" viewBox="0 0 30 6"><path d="M0 6V3L3 0L6 3V6ZM5 6V3L8 0L11 3V6ZM20 6V3L23 0L26 3V6Z" fill="#d8d8d8" stroke="#666" stroke-width="0.4"/></svg>
<div class="a" style="left:540px;top:440px;width:32px;height:1.5px;background:#1030d0;"></div>
<div class="a" style="left:541px;top:440px;width:1.5px;height:1.5px;background:#30d030;"></div>
<div class="a" style="left:546px;top:440px;width:1.5px;height:1.5px;background:#30d030;"></div>
<div class="a" style="left:552px;top:440px;width:1.5px;height:1.5px;background:#30d030;"></div>
<div class="a" style="left:558px;top:440px;width:1.5px;height:1.5px;background:#30d030;"></div>
<svg class="a" style="left:819px;top:430px;" width="9" height="12" viewBox="0 0 9 12"><path d="M0.5 0.5H8.5V8L4.5 11.5L0.5 8Z" fill="#c8c8c8"/></svg>
<div class="a" style="left:1.5px;top:428px;width:533px;height:15px;background:#1f1f1f;"></div>
<svg class="a" style="left:6px;top:434px;" width="9" height="6" viewBox="0 0 9 6"><path d="M0.3 3Q4.5 -1.2 8.7 3Q4.5 7.2 0.3 3Z" fill="#d8d8d8"/><circle cx="4.5" cy="3" r="1.4" fill="#1f1f1f"/></svg>
<svg class="a" style="left:17px;top:432px;" width="11" height="10" viewBox="0 0 11 10"><path d="M0.5 3H3L6 0.5V9.5L3 7H0.5Z" fill="#c8c8c8"/><path d="M7.5 2.5Q9.5 5 7.5 7.5M8.5 1Q11 5 8.5 9" stroke="#c8c8c8" stroke-width="0.9" fill="none"/></svg>
<svg class="a" style="left:30px;top:434px;" width="6" height="6" viewBox="0 0 6 6"><circle cx="3" cy="3" r="2.8" fill="#d8d8d8"/></svg>
<svg class="a" style="left:41px;top:431px;" width="8" height="10" viewBox="0 0 8 10"><rect x="0.5" y="4.5" width="7" height="5" fill="#d8d8d8"/><path d="M2 4.5V3A2 2 0 0 1 6 3V4.5" stroke="#d8d8d8" stroke-width="1.1" fill="none"/><rect x="3.5" y="6" width="1" height="2" fill="#1f1f1f"/></svg>
<div class="a" style="left:54px;top:433px;width:1px;height:9px;background:#111;"></div>
<svg class="a" style="left:65px;top:432px;" width="10" height="10" viewBox="0 0 10 10"><path d="M0.5 0.5H5L9.5 5L5 9.5L0.5 5Z" fill="#c0c0c0"/><circle cx="2.8" cy="2.8" r="0.9" fill="#1f1f1f"/></svg>
<div class="a" style="left:79px;top:433px;width:1px;height:9px;background:#111;"></div>
<div class="t" style="left:83px;top:434.25px;font-size:7px;color:#777;">#</div>
<div class="a" style="left:104px;top:433px;width:1px;height:9px;background:#111;"></div>
<div class="t" style="transform:scaleX(0.831);left:109px;top:431.97px;font-size:8.5px;color:#c0c0c0;">Layer Name</div>
<div class="a" style="left:191px;top:433px;width:1px;height:9px;background:#111;"></div>
<div class="t" style="transform:scaleX(0.870);left:196px;top:431.97px;font-size:8.5px;color:#c0c0c0;">Mode</div>
<div class="t" style="left:237px;top:431.97px;font-size:8.5px;color:#c0c0c0;">T</div>
<div class="t" style="transform:scaleX(0.842);left:250px;top:431.97px;font-size:8.5px;color:#c0c0c0;">Track Matte</div>
<div class="a" style="left:297px;top:433px;width:1px;height:9px;background:#111;"></div>
<svg class="a" style="left:298.5px;top:431px;" width="20" height="10" viewBox="0 0 20 10"><rect x="0.5" y="0.5" width="8.5" height="9" rx="1" fill="#d8d8d8"/><circle cx="4.75" cy="5" r="2.3" fill="#222"/><rect x="10.5" y="0.5" width="8.5" height="9" rx="1" fill="none" stroke="#d0d0d0" stroke-width="1"/><path d="M12.5 8L17 2.5M13 4Q15 2 17 2.5Q17 6 14 7" stroke="#d0d0d0" stroke-width="0.9" fill="none"/></svg>
<div class="a" style="left:321px;top:433px;width:1px;height:9px;background:#111;"></div>
<svg class="a" style="left:325.5px;top:431.5px;" width="10" height="9" viewBox="0 0 10 9"><path d="M1 4.5A4 4 0 0 1 9 4.5Z" fill="#c8c8c8"/><path d="M5 4.5V8M0.5 6H9.5M0.5 8.3H9.5" stroke="#c8c8c8" stroke-width="0.9"/><circle cx="3.5" cy="2.8" r="0.6" fill="#222"/><circle cx="6.5" cy="2.8" r="0.6" fill="#222"/></svg>
<svg class="a" style="left:338px;top:432px;" width="8" height="8" viewBox="0 0 8 8"><circle cx="4" cy="4" r="1.8" fill="#c8c8c8"/><path d="M4 0V1.5M4 6.5V8M0 4H1.5M6.5 4H8M1.2 1.2L2.2 2.2M5.8 5.8L6.8 6.8M1.2 6.8L2.2 5.8M5.8 2.2L6.8 1.2" stroke="#c8c8c8" stroke-width="0.8"/></svg>
<svg class="a" style="left:350px;top:431px;" width="9" height="10" viewBox="0 0 9 10"><path d="M0.5 0.5L8.5 9.5" stroke="#c8c8c8" stroke-width="1"/></svg>
<div class="t" style="transform:scaleX(1.157);left:361px;top:431.80px;font-size:10px;color:#c8c8c8;font-style:italic;">fx</div>
<svg class="a" style="left:372px;top:431px;" width="9" height="10" viewBox="0 0 9 10"><rect x="0.5" y="0.5" width="8" height="9" fill="#c8c8c8"/><rect x="2" y="3" width="5" height="3" fill="#555"/></svg>
<svg class="a" style="left:383px;top:431px;" width="11" height="10" viewBox="0 0 11 10"><circle cx="6.5" cy="4" r="3.8" fill="#c8c8c8"/><path d="M1 8L4 5M2.5 9.5L5.5 6.5" stroke="#c8c8c8" stroke-width="1.2"/></svg>
<svg class="a" style="left:396px;top:432px;" width="9" height="9" viewBox="0 0 9 9"><circle cx="4.5" cy="4.5" r="4" fill="#1f1f1f" stroke="#d0d0d0" stroke-width="1"/><path d="M4.5 0.5A4 4 0 0 1 4.5 8.5Z" fill="#d0d0d0"/></svg>
<svg class="a" style="left:408px;top:432px;" width="9" height="9" viewBox="0 0 9 9"><path d="M4.5 0.5L8.5 2.5V6.5L4.5 8.5L0.5 6.5V2.5Z M0.5 2.5L4.5 4.5L8.5 2.5M4.5 4.5V8.5" stroke="#c8c8c8" stroke-width="0.9" fill="none"/></svg>
<div class="a" style="left:430px;top:433px;width:1px;height:9px;background:#111;"></div>
<div class="t" style="transform:scaleX(0.843);left:435px;top:431.97px;font-size:8.5px;color:#c0c0c0;">Parent &amp; Link</div>
<div class="a" style="left:521px;top:433px;width:1px;height:9px;background:#111;"></div>
<div class="a" style="left:533.5px;top:428px;width:1.5px;height:170px;background:#141414;"></div>
<div class="a" style="left:1.5px;top:443.5px;width:533px;height:13.2px;background:#424242;"></div>
<div class="a" style="left:535px;top:443.5px;width:280px;height:13.2px;background:#4a4a4a;"></div>
<div class="a" style="left:535px;top:443.5px;width:5px;height:13.2px;background:#404040;"></div>
<div class="a" style="left:1.5px;top:455.7px;width:826px;height:1px;background:#1b1b1b;"></div>
<div class="a" style="left:4.5px;top:444.7px;width:10px;height:10px;background:#121212;border-radius:2px;"></div>
<svg class="a" style="left:5.5px;top:447.2px;" width="8" height="5" viewBox="0 0 8 5"><path d="M0.3 2.5Q4 -1 7.7 2.5Q4 6 0.3 2.5Z" fill="#e8e8e8"/><circle cx="4" cy="2.5" r="1.2" fill="#121212"/></svg>
<div class="a" style="left:28px;top:444.7px;width:9.5px;height:10px;background:#121212;border-radius:2px;"></div>
<div class="a" style="left:40px;top:444.7px;width:9.5px;height:10px;background:#121212;border-radius:2px;"></div>
<svg class="a" style="left:58px;top:447.2px;" width="7" height="5" viewBox="0 0 7 5"><path d="M0.8 0.8L3.5 3.8L6.2 0.8" stroke="#ddd" stroke-width="1.2" fill="none"/></svg>
<div class="a" style="left:68px;top:445.09999999999997px;width:9px;height:9.2px;background:#c03a3a;"></div>
<div class="t" style="left:85px;top:445.85px;font-size:9px;color:#c0c0c0;">1</div>
<svg class="a" style="left:108.5px;top:445.2px;" width="7" height="9" viewBox="0 0 7 9"><path d="M0.5 1H6.5M3.5 1V8.5M2 8.5H5" stroke="#a8a8a8" stroke-width="1.3" fill="none"/><path d="M0.7 0.5V2.5M6.3 0.5V2.5" stroke="#a8a8a8" stroke-width="1"/></svg>
<div class="a" style="left:119px;top:443.5px;width:72px;height:12.5px;background:#c6c6c6;"></div>
<div class="t" style="transform:scaleX(0.965);left:121.5px;top:446.85px;font-size:9px;color:#1e1e1e;">Atention game</div>
<div class="a" style="left:194.5px;top:444.2px;width:34.5px;height:11px;background:#000;border-radius:2.5px;"></div>
<div class="t" style="transform:scaleX(0.955);left:200.5px;top:445.85px;font-size:9px;color:#e0e0e0;">Nc</div>
<svg class="a" style="left:217.0px;top:447.7px;" width="7" height="5" viewBox="0 0 7 5"><path d="M0.8 0.8L3.5 4.2L6.2 0.8" stroke="#e8e8e8" stroke-width="1.5" fill="none"/></svg>
<div class="a" style="left:234px;top:444.9px;width:9.5px;height:9.6px;background:#181818;border-radius:1.5px;"></div>
<svg class="a" style="left:248px;top:445.2px;" width="9" height="9" viewBox="0 0 9 9"><path d="M4.5 4.5A1 1 0 0 1 5.8 4.2A2 2 0 0 1 3.2 6.3A3 3 0 0 1 6.8 1.8A4 4 0 0 1 1 7.5" stroke="#9a9a9a" stroke-width="0.9" fill="none"/></svg>
<div class="a" style="left:260px;top:444.2px;width:35px;height:11px;background:#000;border-radius:2.5px;"></div>
<div class="t" style="transform:scaleX(0.955);left:266px;top:445.85px;font-size:9px;color:#e0e0e0;">Nc</div>
<svg class="a" style="left:283px;top:447.7px;" width="7" height="5" viewBox="0 0 7 5"><path d="M0.8 0.8L3.5 4.2L6.2 0.8" stroke="#e8e8e8" stroke-width="1.5" fill="none"/></svg>
<svg class="a" style="left:325.5px;top:445.2px;" width="10" height="9" viewBox="0 0 10 9"><path d="M1 4.5A4 4 0 0 1 9 4.5Z" fill="#c8c8c8"/><path d="M5 4.5V8M0.5 6H9.5M0.5 8.3H9.5" stroke="#c8c8c8" stroke-width="0.9"/><circle cx="3.5" cy="2.8" r="0.6" fill="#222"/><circle cx="6.5" cy="2.8" r="0.6" fill="#222"/></svg>
<div class="a" style="left:337px;top:444.7px;width:11px;height:10px;background:#2a2a2a;"></div>
<svg class="a" style="left:338.5px;top:445.7px;" width="8" height="8" viewBox="0 0 8 8"><circle cx="4" cy="4" r="1.6" fill="#666"/><path d="M4 0V1.5M4 6.5V8M0 4H1.5M6.5 4H8M1.2 1.2L2.2 2.2M5.8 5.8L6.8 6.8M1.2 6.8L2.2 5.8M5.8 2.2L6.8 1.2" stroke="#666" stroke-width="0.8"/></svg>
<div class="a" style="left:349px;top:444.7px;width:10.5px;height:10px;background:#1c1c1c;"></div>
<svg class="a" style="left:350px;top:445.2px;" width="8" height="9" viewBox="0 0 8 9"><path d="M0.8 8.5L7.5 0.8" stroke="#d8d8d8" stroke-width="1.1"/></svg>
<div class="a" style="left:360px;top:444.7px;width:10.5px;height:10px;background:#1c1c1c;"></div>
<div class="t" style="transform:scaleX(1.157);left:361px;top:445.80px;font-size:10px;color:#c8c8c8;font-style:italic;">fx</div>
<svg class="a" style="left:384px;top:444.7px;" width="10" height="10" viewBox="0 0 10 10"><circle cx="6" cy="4" r="3.5" fill="#9a9a9a" stroke="#222" stroke-width="0.6"/><path d="M1 8.5L4 5.5M2.5 9.5L5 7" stroke="#9a9a9a" stroke-width="1.2"/></svg>
<div class="a" style="left:396px;top:444.7px;width:10px;height:10px;background:#1c1c1c;"></div>
<div class="a" style="left:407px;top:444.7px;width:10px;height:10px;background:#1c1c1c;"></div>
<svg class="a" style="left:435px;top:445.2px;" width="9" height="9" viewBox="0 0 9 9"><path d="M4.5 4.5A1 1 0 0 1 5.8 4.2A2 2 0 0 1 3.2 6.3A3 3 0 0 1 6.8 1.8A4 4 0 0 1 1 7.5" stroke="#9a9a9a" stroke-width="0.9" fill="none"/></svg>
<div class="a" style="left:449px;top:444.2px;width:70px;height:11px;background:#000;border-radius:2.5px;"></div>
<div class="t" style="transform:scaleX(0.860);left:455.5px;top:446.85px;font-size:9px;color:#e0e0e0;">None</div>
<svg class="a" style="left:504px;top:447.9px;" width="8" height="5" viewBox="0 0 8 5"><path d="M0.8 0.8L4.0 4.2L7.2 0.8" stroke="#e8e8e8" stroke-width="1.5" fill="none"/></svg>
<div class="a" style="left:770px;top:444.0px;width:8px;height:11.7px;background:#b05252;"></div>
<div class="a" style="left:1.5px;top:456.7px;width:533px;height:13.2px;background:#212121;"></div>
<div class="a" style="left:535px;top:456.7px;width:280px;height:13.2px;background:#232323;"></div>
<div class="a" style="left:535px;top:456.7px;width:5px;height:13.2px;background:#222;"></div>
<div class="a" style="left:1.5px;top:468.9px;width:826px;height:1px;background:#1b1b1b;"></div>
<svg class="a" style="left:7.5px;top:459.4px;" width="4" height="7" viewBox="0 0 4 7"><path d="M3.8 0L0 3.5L3.8 7Z" fill="#777"/></svg>
<svg class="a" style="left:18px;top:459.4px;" width="7" height="7" viewBox="0 0 7 7"><path d="M3.5 0.5L6.5 3.5L3.5 6.5L0.5 3.5Z" fill="none" stroke="#999" stroke-width="0.9"/></svg>
<svg class="a" style="left:30.5px;top:459.4px;" width="5" height="7" viewBox="0 0 5 7"><path d="M0 0L4.5 3.5L0 7Z" fill="#c8c8c8"/></svg>
<svg class="a" style="left:85.5px;top:459.4px;" width="5" height="7" viewBox="0 0 5 7"><path d="M0.8 0.8L3.8 3.5L0.8 6.2" stroke="#ddd" stroke-width="1.2" fill="none"/></svg>
<div class="a" style="left:94.5px;top:457.4px;width:12px;height:11px;background:#141414;border-radius:2px;"></div>
<svg class="a" style="left:95.5px;top:457.9px;" width="10" height="10" viewBox="0 0 10 10"><circle cx="5" cy="5.6" r="3.6" fill="none" stroke="#3a8ff0" stroke-width="1.3"/><path d="M3.5 1H6.5M5 1V2M5 5.6L6.8 3.8" stroke="#3a8ff0" stroke-width="1.1"/></svg>
<svg class="a" style="left:110px;top:458.4px;" width="10" height="9" viewBox="0 0 10 9"><path d="M0.5 0V8.5H9.5" stroke="#a8a8a8" stroke-width="0.9" fill="none"/><path d="M1.5 3L3.5 6.5L5.5 4L8 6" stroke="#a8a8a8" stroke-width="0.9" fill="none"/></svg>
<div class="t" style="transform:scaleX(0.950);left:124.5px;top:459.85px;font-size:9px;color:#c0c0c0;">Opacity</div>
<div class="t" style="transform:scaleX(0.998);left:326px;top:459.85px;font-size:9px;color:#d83b3b;">20</div>
<div class="t" style="transform:scaleX(0.873);left:336px;top:459.85px;font-size:9px;color:#bbb;">%</div>
<svg class="a" style="left:445px;top:458.4px;" width="9" height="9" viewBox="0 0 9 9"><path d="M4.5 4.5A1 1 0 0 1 5.8 4.2A2 2 0 0 1 3.2 6.3A3 3 0 0 1 6.8 1.8A4 4 0 0 1 1 7.5" stroke="#9a9a9a" stroke-width="0.9" fill="none"/></svg>
<svg class="a" style="left:769px;top:459.4px;" width="9" height="7" viewBox="0 0 9 7"><path d="M0.5 3.5L3 0.5H6L8.5 3.5L6 6.5H3Z" fill="#c8c8c8"/><path d="M4.5 0.5V6.5" stroke="#333" stroke-width="1"/></svg>
<div class="a" style="left:1.5px;top:469.9px;width:533px;height:13.2px;background:#333333;"></div>
<div class="a" style="left:535px;top:469.9px;width:280px;height:13.2px;background:#353535;"></div>
<div class="a" style="left:535px;top:469.9px;width:5px;height:13.2px;background:#2c2c2c;"></div>
<div class="a" style="left:1.5px;top:482.09999999999997px;width:826px;height:1px;background:#1b1b1b;"></div>
<div class="a" style="left:4.5px;top:471.09999999999997px;width:10px;height:10px;background:#121212;border-radius:2px;"></div>
<svg class="a" style="left:5.5px;top:473.59999999999997px;" width="8" height="5" viewBox="0 0 8 5"><path d="M0.3 2.5Q4 -1 7.7 2.5Q4 6 0.3 2.5Z" fill="#e8e8e8"/><circle cx="4" cy="2.5" r="1.2" fill="#121212"/></svg>
<div class="a" style="left:28px;top:471.09999999999997px;width:9.5px;height:10px;background:#121212;border-radius:2px;"></div>
<div class="a" style="left:40px;top:471.09999999999997px;width:9.5px;height:10px;background:#121212;border-radius:2px;"></div>
<svg class="a" style="left:58px;top:473.59999999999997px;" width="7" height="5" viewBox="0 0 7 5"><path d="M0.8 0.8L3.5 3.8L6.2 0.8" stroke="#ddd" stroke-width="1.2" fill="none"/></svg>
<div class="a" style="left:68px;top:471.49999999999994px;width:9px;height:9.2px;background:#c03a3a;"></div>
<div class="t" style="left:85px;top:472.85px;font-size:9px;color:#c0c0c0;">2</div>
<svg class="a" style="left:108.5px;top:471.59999999999997px;" width="7" height="9" viewBox="0 0 7 9"><path d="M0.5 1H6.5M3.5 1V8.5M2 8.5H5" stroke="#a8a8a8" stroke-width="1.3" fill="none"/><path d="M0.7 0.5V2.5M6.3 0.5V2.5" stroke="#a8a8a8" stroke-width="1"/></svg>
<div class="t" style="transform:scaleX(0.938);left:121.5px;top:472.85px;font-size:9px;color:#c8c8c8;">No buyers</div>
<div class="a" style="left:194.5px;top:470.59999999999997px;width:34.5px;height:11px;background:#000;border-radius:2.5px;"></div>
<div class="t" style="transform:scaleX(0.955);left:200.5px;top:472.85px;font-size:9px;color:#e0e0e0;">Nc</div>
<svg class="a" style="left:217.0px;top:474.09999999999997px;" width="7" height="5" viewBox="0 0 7 5"><path d="M0.8 0.8L3.5 4.2L6.2 0.8" stroke="#e8e8e8" stroke-width="1.5" fill="none"/></svg>
<div class="a" style="left:234px;top:471.29999999999995px;width:9.5px;height:9.6px;background:#181818;border-radius:1.5px;"></div>
<svg class="a" style="left:248px;top:471.59999999999997px;" width="9" height="9" viewBox="0 0 9 9"><path d="M4.5 4.5A1 1 0 0 1 5.8 4.2A2 2 0 0 1 3.2 6.3A3 3 0 0 1 6.8 1.8A4 4 0 0 1 1 7.5" stroke="#9a9a9a" stroke-width="0.9" fill="none"/></svg>
<div class="a" style="left:260px;top:470.59999999999997px;width:35px;height:11px;background:#000;border-radius:2.5px;"></div>
<div class="t" style="transform:scaleX(0.955);left:266px;top:472.85px;font-size:9px;color:#e0e0e0;">Nc</div>
<svg class="a" style="left:283px;top:474.09999999999997px;" width="7" height="5" viewBox="0 0 7 5"><path d="M0.8 0.8L3.5 4.2L6.2 0.8" stroke="#e8e8e8" stroke-width="1.5" fill="none"/></svg>
<svg class="a" style="left:325.5px;top:471.59999999999997px;" width="10" height="9" viewBox="0 0 10 9"><path d="M1 4.5A4 4 0 0 1 9 4.5Z" fill="#c8c8c8"/><path d="M5 4.5V8M0.5 6H9.5M0.5 8.3H9.5" stroke="#c8c8c8" stroke-width="0.9"/><circle cx="3.5" cy="2.8" r="0.6" fill="#222"/><circle cx="6.5" cy="2.8" r="0.6" fill="#222"/></svg>
<div class="a" style="left:337px;top:471.09999999999997px;width:11px;height:10px;background:#2a2a2a;"></div>
<svg class="a" style="left:338.5px;top:472.09999999999997px;" width="8" height="8" viewBox="0 0 8 8"><circle cx="4" cy="4" r="1.6" fill="#666"/><path d="M4 0V1.5M4 6.5V8M0 4H1.5M6.5 4H8M1.2 1.2L2.2 2.2M5.8 5.8L6.8 6.8M1.2 6.8L2.2 5.8M5.8 2.2L6.8 1.2" stroke="#666" stroke-width="0.8"/></svg>
<div class="a" style="left:349px;top:471.09999999999997px;width:10.5px;height:10px;background:#1c1c1c;"></div>
<svg class="a" style="left:350px;top:471.59999999999997px;" width="8" height="9" viewBox="0 0 8 9"><path d="M0.8 8.5L7.5 0.8" stroke="#d8d8d8" stroke-width="1.1"/></svg>
<div class="a" style="left:360px;top:471.09999999999997px;width:10.5px;height:10px;background:#1c1c1c;"></div>
<div class="t" style="transform:scaleX(1.157);left:361px;top:471.80px;font-size:10px;color:#c8c8c8;font-style:italic;">fx</div>
<svg class="a" style="left:384px;top:471.09999999999997px;" width="10" height="10" viewBox="0 0 10 10"><circle cx="6" cy="4" r="3.5" fill="#9a9a9a" stroke="#222" stroke-width="0.6"/><path d="M1 8.5L4 5.5M2.5 9.5L5 7" stroke="#9a9a9a" stroke-width="1.2"/></svg>
<div class="a" style="left:396px;top:471.09999999999997px;width:10px;height:10px;background:#1c1c1c;"></div>
<div class="a" style="left:407px;top:471.09999999999997px;width:10px;height:10px;background:#1c1c1c;"></div>
<svg class="a" style="left:435px;top:471.59999999999997px;" width="9" height="9" viewBox="0 0 9 9"><path d="M4.5 4.5A1 1 0 0 1 5.8 4.2A2 2 0 0 1 3.2 6.3A3 3 0 0 1 6.8 1.8A4 4 0 0 1 1 7.5" stroke="#9a9a9a" stroke-width="0.9" fill="none"/></svg>
<div class="a" style="left:449px;top:470.59999999999997px;width:70px;height:11px;background:#000;border-radius:2.5px;"></div>
<div class="t" style="transform:scaleX(0.860);left:455.5px;top:472.85px;font-size:9px;color:#e0e0e0;">None</div>
<svg class="a" style="left:504px;top:474.29999999999995px;" width="8" height="5" viewBox="0 0 8 5"><path d="M0.8 0.8L4.0 4.2L7.2 0.8" stroke="#e8e8e8" stroke-width="1.5" fill="none"/></svg>
<div class="a" style="left:756.7px;top:470.4px;width:53.299999999999955px;height:11.7px;background:#8c3b3b;border-radius:2px;"></div>
<div class="a" style="left:1.5px;top:483.1px;width:533px;height:13.2px;background:#212121;"></div>
<div class="a" style="left:535px;top:483.1px;width:280px;height:13.2px;background:#232323;"></div>
<div class="a" style="left:535px;top:483.1px;width:5px;height:13.2px;background:#222;"></div>
<div class="a" style="left:1.5px;top:495.3px;width:826px;height:1px;background:#1b1b1b;"></div>
<svg class="a" style="left:7.5px;top:485.8px;" width="4" height="7" viewBox="0 0 4 7"><path d="M3.8 0L0 3.5L3.8 7Z" fill="#777"/></svg>
<svg class="a" style="left:18px;top:485.8px;" width="7" height="7" viewBox="0 0 7 7"><path d="M3.5 0.5L6.5 3.5L3.5 6.5L0.5 3.5Z" fill="none" stroke="#999" stroke-width="0.9"/></svg>
<svg class="a" style="left:30.5px;top:485.8px;" width="5" height="7" viewBox="0 0 5 7"><path d="M0 0L4.5 3.5L0 7Z" fill="#c8c8c8"/></svg>
<div class="a" style="left:94.5px;top:483.8px;width:12px;height:11px;background:#141414;border-radius:2px;"></div>
<svg class="a" style="left:95.5px;top:484.3px;" width="10" height="10" viewBox="0 0 10 10"><circle cx="5" cy="5.6" r="3.6" fill="none" stroke="#3a8ff0" stroke-width="1.3"/><path d="M3.5 1H6.5M5 1V2M5 5.6L6.8 3.8" stroke="#3a8ff0" stroke-width="1.1"/></svg>
<svg class="a" style="left:110px;top:484.8px;" width="10" height="9" viewBox="0 0 10 9"><path d="M0.5 0V8.5H9.5" stroke="#a8a8a8" stroke-width="0.9" fill="none"/><path d="M1.5 3L3.5 6.5L5.5 4L8 6" stroke="#a8a8a8" stroke-width="0.9" fill="none"/></svg>
<div class="t" style="transform:scaleX(0.950);left:124.5px;top:485.85px;font-size:9px;color:#c0c0c0;">Opacity</div>
<div class="t" style="transform:scaleX(0.965);left:326px;top:485.85px;font-size:9px;color:#3d8ef0;">100</div>
<div class="t" style="transform:scaleX(0.873);left:340.5px;top:485.85px;font-size:9px;color:#bbb;">%</div>
<svg class="a" style="left:445px;top:484.8px;" width="9" height="9" viewBox="0 0 9 9"><path d="M4.5 4.5A1 1 0 0 1 5.8 4.2A2 2 0 0 1 3.2 6.3A3 3 0 0 1 6.8 1.8A4 4 0 0 1 1 7.5" stroke="#9a9a9a" stroke-width="0.9" fill="none"/></svg>
<svg class="a" style="left:762px;top:485.8px;" width="9" height="7" viewBox="0 0 9 7"><path d="M0.5 3.5L3 0.5H6L8.5 3.5L6 6.5H3Z" fill="#c8c8c8"/><path d="M4.5 0.5V6.5" stroke="#333" stroke-width="1"/></svg>
<div class="a" style="left:1.5px;top:496.3px;width:533px;height:13.2px;background:#333333;"></div>
<div class="a" style="left:535px;top:496.3px;width:280px;height:13.2px;background:#353535;"></div>
<div class="a" style="left:535px;top:496.3px;width:5px;height:13.2px;background:#2c2c2c;"></div>
<div class="a" style="left:1.5px;top:508.5px;width:826px;height:1px;background:#1b1b1b;"></div>
<div class="a" style="left:4.5px;top:497.5px;width:10px;height:10px;background:#121212;border-radius:2px;"></div>
<svg class="a" style="left:5.5px;top:500.0px;" width="8" height="5" viewBox="0 0 8 5"><path d="M0.3 2.5Q4 -1 7.7 2.5Q4 6 0.3 2.5Z" fill="#e8e8e8"/><circle cx="4" cy="2.5" r="1.2" fill="#121212"/></svg>
<div class="a" style="left:28px;top:497.5px;width:9.5px;height:10px;background:#121212;border-radius:2px;"></div>
<div class="a" style="left:40px;top:497.5px;width:9.5px;height:10px;background:#121212;border-radius:2px;"></div>
<svg class="a" style="left:59px;top:499.0px;" width="5" height="7" viewBox="0 0 5 7"><path d="M0.8 0.8L3.8 3.5L0.8 6.2" stroke="#ddd" stroke-width="1.2" fill="none"/></svg>
<div class="a" style="left:68px;top:497.9px;width:9px;height:9.2px;background:#b5a17f;"></div>
<div class="t" style="left:85px;top:498.85px;font-size:9px;color:#c0c0c0;">3</div>
<svg class="a" style="left:106px;top:497.5px;" width="11" height="10" viewBox="0 0 11 10"><rect x="0" y="0" width="11" height="10" fill="#bdbdbd"/><rect x="1.5" y="1" width="8" height="8" fill="#2a2a2a"/><circle cx="4" cy="3.5" r="1.4" fill="#3b8eea"/><circle cx="6.8" cy="4.8" r="1.5" fill="#e0302a"/><circle cx="4.6" cy="6.6" r="1.3" fill="#2aa050"/></svg>
<div class="t" style="transform:scaleX(1.056);left:121.5px;top:498.85px;font-size:9px;color:#c8c8c8;">[1m]</div>
<div class="a" style="left:194.5px;top:497.0px;width:34.5px;height:11px;background:#000;border-radius:2.5px;"></div>
<div class="t" style="transform:scaleX(0.955);left:200.5px;top:498.85px;font-size:9px;color:#e0e0e0;">Nc</div>
<svg class="a" style="left:217.0px;top:500.5px;" width="7" height="5" viewBox="0 0 7 5"><path d="M0.8 0.8L3.5 4.2L6.2 0.8" stroke="#e8e8e8" stroke-width="1.5" fill="none"/></svg>
<div class="a" style="left:234px;top:497.7px;width:9.5px;height:9.6px;background:#181818;border-radius:1.5px;"></div>
<svg class="a" style="left:248px;top:498.0px;" width="9" height="9" viewBox="0 0 9 9"><path d="M4.5 4.5A1 1 0 0 1 5.8 4.2A2 2 0 0 1 3.2 6.3A3 3 0 0 1 6.8 1.8A4 4 0 0 1 1 7.5" stroke="#9a9a9a" stroke-width="0.9" fill="none"/></svg>
<div class="a" style="left:260px;top:497.0px;width:35px;height:11px;background:#000;border-radius:2.5px;"></div>
<div class="t" style="transform:scaleX(0.955);left:266px;top:498.85px;font-size:9px;color:#e0e0e0;">Nc</div>
<svg class="a" style="left:283px;top:500.5px;" width="7" height="5" viewBox="0 0 7 5"><path d="M0.8 0.8L3.5 4.2L6.2 0.8" stroke="#e8e8e8" stroke-width="1.5" fill="none"/></svg>
<svg class="a" style="left:325.5px;top:498.0px;" width="10" height="9" viewBox="0 0 10 9"><path d="M1 4.5A4 4 0 0 1 9 4.5Z" fill="#c8c8c8"/><path d="M5 4.5V8M0.5 6H9.5M0.5 8.3H9.5" stroke="#c8c8c8" stroke-width="0.9"/><circle cx="3.5" cy="2.8" r="0.6" fill="#222"/><circle cx="6.5" cy="2.8" r="0.6" fill="#222"/></svg>
<div class="a" style="left:337px;top:497.5px;width:11px;height:10px;background:#262626;"></div>
<div class="a" style="left:349px;top:497.5px;width:10.5px;height:10px;background:#1c1c1c;"></div>
<svg class="a" style="left:350px;top:498.0px;" width="8" height="9" viewBox="0 0 8 9"><path d="M0.8 8.5L7.5 0.8" stroke="#d8d8d8" stroke-width="1.1"/></svg>
<div class="a" style="left:360px;top:497.5px;width:10.5px;height:10px;background:#1c1c1c;"></div>
<div class="t" style="transform:scaleX(1.157);left:361px;top:497.80px;font-size:10px;color:#c8c8c8;font-style:italic;">fx</div>
<svg class="a" style="left:384px;top:497.5px;" width="10" height="10" viewBox="0 0 10 10"><circle cx="6" cy="4" r="3.5" fill="#9a9a9a" stroke="#222" stroke-width="0.6"/><path d="M1 8.5L4 5.5M2.5 9.5L5 7" stroke="#9a9a9a" stroke-width="1.2"/></svg>
<div class="a" style="left:396px;top:497.5px;width:10px;height:10px;background:#1c1c1c;"></div>
<div class="a" style="left:407px;top:497.5px;width:10px;height:10px;background:#1c1c1c;"></div>
<svg class="a" style="left:435px;top:498.0px;" width="9" height="9" viewBox="0 0 9 9"><path d="M4.5 4.5A1 1 0 0 1 5.8 4.2A2 2 0 0 1 3.2 6.3A3 3 0 0 1 6.8 1.8A4 4 0 0 1 1 7.5" stroke="#9a9a9a" stroke-width="0.9" fill="none"/></svg>
<div class="a" style="left:449px;top:497.0px;width:70px;height:11px;background:#000;border-radius:2.5px;"></div>
<div class="t" style="transform:scaleX(0.860);left:455.5px;top:498.85px;font-size:9px;color:#e0e0e0;">None</div>
<svg class="a" style="left:504px;top:500.7px;" width="8" height="5" viewBox="0 0 8 5"><path d="M0.8 0.8L4.0 4.2L7.2 0.8" stroke="#e8e8e8" stroke-width="1.5" fill="none"/></svg>
<div class="a" style="left:540px;top:496.8px;width:270px;height:11.7px;background:#716552;border-radius:2px;"></div>
<div class="a" style="left:1.5px;top:509.5px;width:533px;height:13.2px;background:#333333;"></div>
<div class="a" style="left:535px;top:509.5px;width:280px;height:13.2px;background:#353535;"></div>
<div class="a" style="left:535px;top:509.5px;width:5px;height:13.2px;background:#2c2c2c;"></div>
<div class="a" style="left:1.5px;top:521.7px;width:826px;height:1px;background:#1b1b1b;"></div>
<div class="a" style="left:4.5px;top:510.70000000000005px;width:10px;height:10px;background:#121212;border-radius:2px;"></div>
<svg class="a" style="left:5.5px;top:513.2px;" width="8" height="5" viewBox="0 0 8 5"><path d="M0.3 2.5Q4 -1 7.7 2.5Q4 6 0.3 2.5Z" fill="#e8e8e8"/><circle cx="4" cy="2.5" r="1.2" fill="#121212"/></svg>
<div class="a" style="left:16.5px;top:510.70000000000005px;width:9.5px;height:10px;background:#121212;border-radius:2px;"></div>
<div class="a" style="left:28px;top:510.70000000000005px;width:9.5px;height:10px;background:#121212;border-radius:2px;"></div>
<div class="a" style="left:40px;top:510.70000000000005px;width:9.5px;height:10px;background:#121212;border-radius:2px;"></div>
<svg class="a" style="left:59px;top:512.2px;" width="5" height="7" viewBox="0 0 5 7"><path d="M0.8 0.8L3.8 3.5L0.8 6.2" stroke="#ddd" stroke-width="1.2" fill="none"/></svg>
<div class="a" style="left:68px;top:511.1px;width:9px;height:9.2px;background:#a6d0c6;"></div>
<div class="t" style="left:85px;top:511.85px;font-size:9px;color:#c0c0c0;">4</div>
<svg class="a" style="left:108px;top:510px;" width="10" height="12" viewBox="0 0 10 12"><path d="M0.5 0.5H6.5L9.5 3.5V11.5H0.5Z" fill="#f0f0f0"/><circle cx="5" cy="6.5" r="3" fill="#333"/><circle cx="5" cy="6.5" r="1.8" fill="#b33"/><circle cx="5" cy="6.5" r="1" fill="#eee"/></svg>
<svg class="a" style="left:120px;top:510.70000000000005px;" width="10" height="10" viewBox="0 0 10 10"><rect x="0.5" y="0.5" width="9" height="9" fill="#222" stroke="#888" stroke-width="1"/><circle cx="5" cy="5" r="2.5" fill="#555"/></svg>
<div class="t" style="transform:scaleX(0.921);left:134px;top:512.85px;font-size:9px;color:#c8c8c8;">[never ....mp4]</div>
<div class="a" style="left:194.5px;top:510.20000000000005px;width:34.5px;height:11px;background:#000;border-radius:2.5px;"></div>
<div class="t" style="transform:scaleX(0.955);left:200.5px;top:511.85px;font-size:9px;color:#e0e0e0;">Nc</div>
<svg class="a" style="left:217.0px;top:513.7px;" width="7" height="5" viewBox="0 0 7 5"><path d="M0.8 0.8L3.5 4.2L6.2 0.8" stroke="#e8e8e8" stroke-width="1.5" fill="none"/></svg>
<div class="a" style="left:234px;top:510.90000000000003px;width:9.5px;height:9.6px;background:#181818;border-radius:1.5px;"></div>
<svg class="a" style="left:248px;top:511.20000000000005px;" width="9" height="9" viewBox="0 0 9 9"><path d="M4.5 4.5A1 1 0 0 1 5.8 4.2A2 2 0 0 1 3.2 6.3A3 3 0 0 1 6.8 1.8A4 4 0 0 1 1 7.5" stroke="#9a9a9a" stroke-width="0.9" fill="none"/></svg>
<div class="a" style="left:260px;top:510.20000000000005px;width:35px;height:11px;background:#000;border-radius:2.5px;"></div>
<div class="t" style="transform:scaleX(0.879);left:266px;top:511.85px;font-size:9px;color:#e0e0e0;">5. !</div>
<svg class="a" style="left:283px;top:513.7px;" width="7" height="5" viewBox="0 0 7 5"><path d="M0.8 0.8L3.5 4.2L6.2 0.8" stroke="#e8e8e8" stroke-width="1.5" fill="none"/></svg>
<svg class="a" style="left:298.5px;top:511.20000000000005px;" width="9" height="9" viewBox="0 0 9 9"><rect x="0" y="0" width="9" height="9" rx="1" fill="#d8d8d8"/><circle cx="4.5" cy="4.5" r="2.3" fill="#222"/></svg>
<div class="a" style="left:309.5px;top:511.20000000000005px;width:9px;height:9px;background:#181818;border-radius:1px;"></div>
<svg class="a" style="left:325.5px;top:511.20000000000005px;" width="10" height="9" viewBox="0 0 10 9"><path d="M1 4.5A4 4 0 0 1 9 4.5Z" fill="#c8c8c8"/><path d="M5 4.5V8M0.5 6H9.5M0.5 8.3H9.5" stroke="#c8c8c8" stroke-width="0.9"/><circle cx="3.5" cy="2.8" r="0.6" fill="#222"/><circle cx="6.5" cy="2.8" r="0.6" fill="#222"/></svg>
<div class="a" style="left:349px;top:510.70000000000005px;width:10.5px;height:10px;background:#1c1c1c;"></div>
<svg class="a" style="left:350px;top:511.20000000000005px;" width="8" height="9" viewBox="0 0 8 9"><path d="M0.8 8.5L7.5 0.8" stroke="#d8d8d8" stroke-width="1.1"/></svg>
<div class="a" style="left:395px;top:510.70000000000005px;width:10.5px;height:10px;background:#1c1c1c;"></div>
<svg class="a" style="left:384px;top:510.70000000000005px;" width="10" height="10" viewBox="0 0 10 10"><circle cx="6" cy="4" r="3.5" fill="#9a9a9a" stroke="#222" stroke-width="0.6"/><path d="M1 8.5L4 5.5M2.5 9.5L5 7" stroke="#9a9a9a" stroke-width="1.2"/></svg>
<div class="a" style="left:396px;top:510.70000000000005px;width:10px;height:10px;background:#1c1c1c;"></div>
<div class="a" style="left:407px;top:510.70000000000005px;width:10px;height:10px;background:#1c1c1c;"></div>
<svg class="a" style="left:408px;top:511.20000000000005px;" width="9" height="9" viewBox="0 0 9 9"><path d="M4.5 0.5L8.5 2.5V6.5L4.5 8.5L0.5 6.5V2.5Z M0.5 2.5L4.5 4.5L8.5 2.5M4.5 4.5V8.5" stroke="#c8c8c8" stroke-width="0.9" fill="none"/></svg>
<svg class="a" style="left:435px;top:511.20000000000005px;" width="9" height="9" viewBox="0 0 9 9"><path d="M4.5 4.5A1 1 0 0 1 5.8 4.2A2 2 0 0 1 3.2 6.3A3 3 0 0 1 6.8 1.8A4 4 0 0 1 1 7.5" stroke="#9a9a9a" stroke-width="0.9" fill="none"/></svg>
<div class="a" style="left:449px;top:510.20000000000005px;width:70px;height:11px;background:#000;border-radius:2.5px;"></div>
<div class="t" style="transform:scaleX(0.848);left:455.5px;top:512.85px;font-size:9px;color:#e0e0e0;">5. Shape Lay</div>
<svg class="a" style="left:504px;top:513.9000000000001px;" width="8" height="5" viewBox="0 0 8 5"><path d="M0.8 0.8L4.0 4.2L7.2 0.8" stroke="#e8e8e8" stroke-width="1.5" fill="none"/></svg>
<div class="a" style="left:540px;top:510.0px;width:238px;height:11.7px;background:#4e5c5a;border-radius:2px;"></div>
<div class="a" style="left:698.4px;top:510.0px;width:79.60000000000002px;height:11.7px;background:#6e807c;border-radius:0 2px 2px 0;"></div>
<div class="a" style="left:1.5px;top:522.7px;width:533px;height:13.2px;background:#333333;"></div>
<div class="a" style="left:535px;top:522.7px;width:280px;height:13.2px;background:#353535;"></div>
<div class="a" style="left:535px;top:522.7px;width:5px;height:13.2px;background:#2c2c2c;"></div>
<div class="a" style="left:1.5px;top:534.9000000000001px;width:826px;height:1px;background:#1b1b1b;"></div>
<div class="a" style="left:4.5px;top:523.9000000000001px;width:10px;height:10px;background:#121212;border-radius:2px;"></div>
<div class="a" style="left:40px;top:523.9000000000001px;width:9.5px;height:10px;background:#121212;border-radius:2px;"></div>
<svg class="a" style="left:59px;top:525.4000000000001px;" width="5" height="7" viewBox="0 0 5 7"><path d="M0.8 0.8L3.8 3.5L0.8 6.2" stroke="#ddd" stroke-width="1.2" fill="none"/></svg>
<div class="a" style="left:68px;top:524.3000000000001px;width:9px;height:9.2px;background:#6b80e6;"></div>
<div class="t" style="left:85px;top:524.85px;font-size:9px;color:#c0c0c0;">5</div>
<svg class="a" style="left:108px;top:523.9000000000001px;" width="10" height="10" viewBox="0 0 10 10"><path d="M5 0.3L6.3 3.6L9.8 3.8L7.1 6L8 9.5L5 7.6L2 9.5L2.9 6L0.2 3.8L3.7 3.6Z" fill="#c8c8c8"/></svg>
<svg class="a" style="left:120px;top:523.9000000000001px;" width="10" height="10" viewBox="0 0 10 10"><rect x="0.5" y="0.5" width="9" height="9" fill="#181818" stroke="#999" stroke-width="1"/><circle cx="5" cy="5" r="2" fill="#ddd"/></svg>
<div class="t" style="transform:scaleX(0.914);left:134px;top:525.85px;font-size:9px;color:#c8c8c8;">Shape Layer 4</div>
<div class="a" style="left:194.5px;top:523.4000000000001px;width:34.5px;height:11px;background:#000;border-radius:2.5px;"></div>
<div class="t" style="transform:scaleX(0.955);left:200.5px;top:524.85px;font-size:9px;color:#e0e0e0;">Nc</div>
<svg class="a" style="left:217.0px;top:526.9000000000001px;" width="7" height="5" viewBox="0 0 7 5"><path d="M0.8 0.8L3.5 4.2L6.2 0.8" stroke="#e8e8e8" stroke-width="1.5" fill="none"/></svg>
<svg class="a" style="left:248px;top:524.4000000000001px;" width="9" height="9" viewBox="0 0 9 9"><path d="M4.5 4.5A1 1 0 0 1 5.8 4.2A2 2 0 0 1 3.2 6.3A3 3 0 0 1 6.8 1.8A4 4 0 0 1 1 7.5" stroke="#9a9a9a" stroke-width="0.9" fill="none"/></svg>
<div class="a" style="left:260px;top:523.4000000000001px;width:35px;height:11px;background:#000;border-radius:2.5px;"></div>
<div class="t" style="transform:scaleX(0.955);left:266px;top:524.85px;font-size:9px;color:#e0e0e0;">Nc</div>
<svg class="a" style="left:283px;top:526.9000000000001px;" width="7" height="5" viewBox="0 0 7 5"><path d="M0.8 0.8L3.5 4.2L6.2 0.8" stroke="#e8e8e8" stroke-width="1.5" fill="none"/></svg>
<svg class="a" style="left:325.5px;top:524.4000000000001px;" width="10" height="9" viewBox="0 0 10 9"><path d="M1 4.5A4 4 0 0 1 9 4.5Z" fill="#c8c8c8"/><path d="M5 4.5V8M0.5 6H9.5M0.5 8.3H9.5" stroke="#c8c8c8" stroke-width="0.9"/><circle cx="3.5" cy="2.8" r="0.6" fill="#222"/><circle cx="6.5" cy="2.8" r="0.6" fill="#222"/></svg>
<div class="a" style="left:337px;top:523.9000000000001px;width:11px;height:10px;background:#2a2a2a;"></div>
<svg class="a" style="left:338.5px;top:524.9000000000001px;" width="8" height="8" viewBox="0 0 8 8"><circle cx="4" cy="4" r="1.6" fill="#666"/><path d="M4 0V1.5M4 6.5V8M0 4H1.5M6.5 4H8M1.2 1.2L2.2 2.2M5.8 5.8L6.8 6.8M1.2 6.8L2.2 5.8M5.8 2.2L6.8 1.2" stroke="#666" stroke-width="0.8"/></svg>
<div class="a" style="left:349px;top:523.9000000000001px;width:10.5px;height:10px;background:#1c1c1c;"></div>
<svg class="a" style="left:350px;top:524.4000000000001px;" width="8" height="9" viewBox="0 0 8 9"><path d="M0.8 8.5L7.5 0.8" stroke="#d8d8d8" stroke-width="1.1"/></svg>
<div class="a" style="left:395px;top:523.9000000000001px;width:10.5px;height:10px;background:#1c1c1c;"></div>
<svg class="a" style="left:384px;top:523.9000000000001px;" width="10" height="10" viewBox="0 0 10 10"><circle cx="6" cy="4" r="3.5" fill="#9a9a9a" stroke="#222" stroke-width="0.6"/><path d="M1 8.5L4 5.5M2.5 9.5L5 7" stroke="#9a9a9a" stroke-width="1.2"/></svg>
<div class="a" style="left:407px;top:523.9000000000001px;width:10px;height:10px;background:#1c1c1c;"></div>
<svg class="a" style="left:435px;top:524.4000000000001px;" width="9" height="9" viewBox="0 0 9 9"><path d="M4.5 4.5A1 1 0 0 1 5.8 4.2A2 2 0 0 1 3.2 6.3A3 3 0 0 1 6.8 1.8A4 4 0 0 1 1 7.5" stroke="#9a9a9a" stroke-width="0.9" fill="none"/></svg>
<div class="a" style="left:449px;top:523.4000000000001px;width:70px;height:11px;background:#000;border-radius:2.5px;"></div>
<div class="t" style="transform:scaleX(0.899);left:455.5px;top:525.85px;font-size:9px;color:#e0e0e0;">6. 6534e430</div>
<svg class="a" style="left:504px;top:527.1000000000001px;" width="8" height="5" viewBox="0 0 8 5"><path d="M0.8 0.8L4.0 4.2L7.2 0.8" stroke="#e8e8e8" stroke-width="1.5" fill="none"/></svg>
<div class="a" style="left:698.4px;top:523.2px;width:111.60000000000002px;height:11.7px;background:#4f5c8e;border-radius:2px;"></div>
<div class="a" style="left:1.5px;top:535.9px;width:533px;height:13.2px;background:#333333;"></div>
<div class="a" style="left:535px;top:535.9px;width:280px;height:13.2px;background:#353535;"></div>
<div class="a" style="left:535px;top:535.9px;width:5px;height:13.2px;background:#2c2c2c;"></div>
<div class="a" style="left:1.5px;top:548.1px;width:826px;height:1px;background:#1b1b1b;"></div>
<div class="a" style="left:4.5px;top:537.1px;width:10px;height:10px;background:#121212;border-radius:2px;"></div>
<svg class="a" style="left:5.5px;top:539.6px;" width="8" height="5" viewBox="0 0 8 5"><path d="M0.3 2.5Q4 -1 7.7 2.5Q4 6 0.3 2.5Z" fill="#e8e8e8"/><circle cx="4" cy="2.5" r="1.2" fill="#121212"/></svg>
<div class="a" style="left:28px;top:537.1px;width:9.5px;height:10px;background:#121212;border-radius:2px;"></div>
<div class="a" style="left:40px;top:537.1px;width:9.5px;height:10px;background:#121212;border-radius:2px;"></div>
<svg class="a" style="left:59px;top:538.6px;" width="5" height="7" viewBox="0 0 5 7"><path d="M0.8 0.8L3.8 3.5L0.8 6.2" stroke="#ddd" stroke-width="1.2" fill="none"/></svg>
<div class="a" style="left:68px;top:537.5px;width:9px;height:9.2px;background:#aaaad8;"></div>
<div class="t" style="left:85px;top:538.85px;font-size:9px;color:#c0c0c0;">6</div>
<svg class="a" style="left:110px;top:536px;" width="10" height="12" viewBox="0 0 10 12"><path d="M0.5 0.5H6.5L9.5 3.5V11.5H0.5Z" fill="#f0f0f0"/><rect x="2" y="4" width="6" height="5" fill="#2f8ae0"/><path d="M2 9L5 6L8 8" stroke="#9cd0ff" stroke-width="0.8" fill="none"/></svg>
<div class="t" style="transform:scaleX(0.922);left:121.5px;top:538.85px;font-size:9px;color:#c8c8c8;">[6534e4...ew.png]</div>
<div class="a" style="left:194.5px;top:536.6px;width:34.5px;height:11px;background:#000;border-radius:2.5px;"></div>
<div class="t" style="transform:scaleX(0.955);left:200.5px;top:538.85px;font-size:9px;color:#e0e0e0;">Nc</div>
<svg class="a" style="left:217.0px;top:540.1px;" width="7" height="5" viewBox="0 0 7 5"><path d="M0.8 0.8L3.5 4.2L6.2 0.8" stroke="#e8e8e8" stroke-width="1.5" fill="none"/></svg>
<div class="a" style="left:234px;top:537.3000000000001px;width:9.5px;height:9.6px;background:#181818;border-radius:1.5px;"></div>
<svg class="a" style="left:248px;top:537.6px;" width="9" height="9" viewBox="0 0 9 9"><path d="M4.5 4.5A1 1 0 0 1 5.8 4.2A2 2 0 0 1 3.2 6.3A3 3 0 0 1 6.8 1.8A4 4 0 0 1 1 7.5" stroke="#9a9a9a" stroke-width="0.9" fill="none"/></svg>
<div class="a" style="left:260px;top:536.6px;width:35px;height:11px;background:#000;border-radius:2.5px;"></div>
<div class="t" style="transform:scaleX(0.955);left:266px;top:538.85px;font-size:9px;color:#e0e0e0;">Nc</div>
<svg class="a" style="left:283px;top:540.1px;" width="7" height="5" viewBox="0 0 7 5"><path d="M0.8 0.8L3.5 4.2L6.2 0.8" stroke="#e8e8e8" stroke-width="1.5" fill="none"/></svg>
<svg class="a" style="left:325.5px;top:537.6px;" width="10" height="9" viewBox="0 0 10 9"><path d="M1 4.5A4 4 0 0 1 9 4.5Z" fill="#c8c8c8"/><path d="M5 4.5V8M0.5 6H9.5M0.5 8.3H9.5" stroke="#c8c8c8" stroke-width="0.9"/><circle cx="3.5" cy="2.8" r="0.6" fill="#222"/><circle cx="6.5" cy="2.8" r="0.6" fill="#222"/></svg>
<div class="a" style="left:349px;top:537.1px;width:10.5px;height:10px;background:#1c1c1c;"></div>
<svg class="a" style="left:350px;top:537.6px;" width="8" height="9" viewBox="0 0 8 9"><path d="M0.8 8.5L7.5 0.8" stroke="#d8d8d8" stroke-width="1.1"/></svg>
<div class="a" style="left:360px;top:537.1px;width:10.5px;height:10px;background:#1c1c1c;"></div>
<div class="t" style="transform:scaleX(1.157);left:361px;top:537.80px;font-size:10px;color:#c8c8c8;font-style:italic;">fx</div>
<svg class="a" style="left:384px;top:537.1px;" width="10" height="10" viewBox="0 0 10 10"><circle cx="6" cy="4" r="3.5" fill="#9a9a9a" stroke="#222" stroke-width="0.6"/><path d="M1 8.5L4 5.5M2.5 9.5L5 7" stroke="#9a9a9a" stroke-width="1.2"/></svg>
<div class="a" style="left:396px;top:537.1px;width:10px;height:10px;background:#1c1c1c;"></div>
<div class="a" style="left:407px;top:537.1px;width:10px;height:10px;background:#1c1c1c;"></div>
<svg class="a" style="left:435px;top:537.6px;" width="9" height="9" viewBox="0 0 9 9"><path d="M4.5 4.5A1 1 0 0 1 5.8 4.2A2 2 0 0 1 3.2 6.3A3 3 0 0 1 6.8 1.8A4 4 0 0 1 1 7.5" stroke="#9a9a9a" stroke-width="0.9" fill="none"/></svg>
<div class="a" style="left:449px;top:536.6px;width:70px;height:11px;background:#000;border-radius:2.5px;"></div>
<div class="t" style="transform:scaleX(0.860);left:455.5px;top:538.85px;font-size:9px;color:#e0e0e0;">None</div>
<svg class="a" style="left:504px;top:540.3000000000001px;" width="8" height="5" viewBox="0 0 8 5"><path d="M0.8 0.8L4.0 4.2L7.2 0.8" stroke="#e8e8e8" stroke-width="1.5" fill="none"/></svg>
<div class="a" style="left:698.4px;top:536.4px;width:111.60000000000002px;height:11.7px;background:#7b7b96;border-radius:2px;"></div>
<div class="a" style="left:1.5px;top:549.1px;width:533px;height:13.2px;background:#333333;"></div>
<div class="a" style="left:535px;top:549.1px;width:280px;height:13.2px;background:#353535;"></div>
<div class="a" style="left:535px;top:549.1px;width:5px;height:13.2px;background:#2c2c2c;"></div>
<div class="a" style="left:1.5px;top:561.3000000000001px;width:826px;height:1px;background:#1b1b1b;"></div>
<div class="a" style="left:4.5px;top:550.3000000000001px;width:10px;height:10px;background:#121212;border-radius:2px;"></div>
<svg class="a" style="left:5.5px;top:552.8000000000001px;" width="8" height="5" viewBox="0 0 8 5"><path d="M0.3 2.5Q4 -1 7.7 2.5Q4 6 0.3 2.5Z" fill="#e8e8e8"/><circle cx="4" cy="2.5" r="1.2" fill="#121212"/></svg>
<div class="a" style="left:28px;top:550.3000000000001px;width:9.5px;height:10px;background:#121212;border-radius:2px;"></div>
<div class="a" style="left:40px;top:550.3000000000001px;width:9.5px;height:10px;background:#121212;border-radius:2px;"></div>
<svg class="a" style="left:59px;top:551.8000000000001px;" width="5" height="7" viewBox="0 0 5 7"><path d="M0.8 0.8L3.8 3.5L0.8 6.2" stroke="#ddd" stroke-width="1.2" fill="none"/></svg>
<div class="a" style="left:68px;top:550.7px;width:9px;height:9.2px;background:#c03a3a;"></div>
<div class="t" style="left:85px;top:551.85px;font-size:9px;color:#c0c0c0;">7</div>
<svg class="a" style="left:108.5px;top:550.8000000000001px;" width="7" height="9" viewBox="0 0 7 9"><path d="M0.5 1H6.5M3.5 1V8.5M2 8.5H5" stroke="#a8a8a8" stroke-width="1.3" fill="none"/><path d="M0.7 0.5V2.5M6.3 0.5V2.5" stroke="#a8a8a8" stroke-width="1"/></svg>
<div class="t" style="transform:scaleX(0.964);left:121.5px;top:551.85px;font-size:9px;color:#c8c8c8;">How do ... person</div>
<div class="a" style="left:194.5px;top:549.8000000000001px;width:34.5px;height:11px;background:#000;border-radius:2.5px;"></div>
<div class="t" style="transform:scaleX(0.955);left:200.5px;top:551.85px;font-size:9px;color:#e0e0e0;">Nc</div>
<svg class="a" style="left:217.0px;top:553.3000000000001px;" width="7" height="5" viewBox="0 0 7 5"><path d="M0.8 0.8L3.5 4.2L6.2 0.8" stroke="#e8e8e8" stroke-width="1.5" fill="none"/></svg>
<div class="a" style="left:234px;top:550.5000000000001px;width:9.5px;height:9.6px;background:#181818;border-radius:1.5px;"></div>
<svg class="a" style="left:248px;top:550.8000000000001px;" width="9" height="9" viewBox="0 0 9 9"><path d="M4.5 4.5A1 1 0 0 1 5.8 4.2A2 2 0 0 1 3.2 6.3A3 3 0 0 1 6.8 1.8A4 4 0 0 1 1 7.5" stroke="#9a9a9a" stroke-width="0.9" fill="none"/></svg>
<div class="a" style="left:260px;top:549.8000000000001px;width:35px;height:11px;background:#000;border-radius:2.5px;"></div>
<div class="t" style="transform:scaleX(0.955);left:266px;top:551.85px;font-size:9px;color:#e0e0e0;">Nc</div>
<svg class="a" style="left:283px;top:553.3000000000001px;" width="7" height="5" viewBox="0 0 7 5"><path d="M0.8 0.8L3.5 4.2L6.2 0.8" stroke="#e8e8e8" stroke-width="1.5" fill="none"/></svg>
<svg class="a" style="left:325.5px;top:550.8000000000001px;" width="10" height="9" viewBox="0 0 10 9"><path d="M1 4.5A4 4 0 0 1 9 4.5Z" fill="#c8c8c8"/><path d="M5 4.5V8M0.5 6H9.5M0.5 8.3H9.5" stroke="#c8c8c8" stroke-width="0.9"/><circle cx="3.5" cy="2.8" r="0.6" fill="#222"/><circle cx="6.5" cy="2.8" r="0.6" fill="#222"/></svg>
<div class="a" style="left:337px;top:550.3000000000001px;width:11px;height:10px;background:#2a2a2a;"></div>
<svg class="a" style="left:338.5px;top:551.3000000000001px;" width="8" height="8" viewBox="0 0 8 8"><circle cx="4" cy="4" r="1.6" fill="#666"/><path d="M4 0V1.5M4 6.5V8M0 4H1.5M6.5 4H8M1.2 1.2L2.2 2.2M5.8 5.8L6.8 6.8M1.2 6.8L2.2 5.8M5.8 2.2L6.8 1.2" stroke="#666" stroke-width="0.8"/></svg>
<div class="a" style="left:349px;top:550.3000000000001px;width:10.5px;height:10px;background:#1c1c1c;"></div>
<svg class="a" style="left:350px;top:550.8000000000001px;" width="8" height="9" viewBox="0 0 8 9"><path d="M0.8 8.5L7.5 0.8" stroke="#d8d8d8" stroke-width="1.1"/></svg>
<div class="a" style="left:360px;top:550.3000000000001px;width:10.5px;height:10px;background:#1c1c1c;"></div>
<div class="t" style="transform:scaleX(1.157);left:361px;top:550.80px;font-size:10px;color:#c8c8c8;font-style:italic;">fx</div>
<svg class="a" style="left:384px;top:550.3000000000001px;" width="10" height="10" viewBox="0 0 10 10"><circle cx="6" cy="4" r="3.5" fill="#9a9a9a" stroke="#222" stroke-width="0.6"/><path d="M1 8.5L4 5.5M2.5 9.5L5 7" stroke="#9a9a9a" stroke-width="1.2"/></svg>
<div class="a" style="left:396px;top:550.3000000000001px;width:10px;height:10px;background:#1c1c1c;"></div>
<div class="a" style="left:407px;top:550.3000000000001px;width:10px;height:10px;background:#1c1c1c;"></div>
<svg class="a" style="left:435px;top:550.8000000000001px;" width="9" height="9" viewBox="0 0 9 9"><path d="M4.5 4.5A1 1 0 0 1 5.8 4.2A2 2 0 0 1 3.2 6.3A3 3 0 0 1 6.8 1.8A4 4 0 0 1 1 7.5" stroke="#9a9a9a" stroke-width="0.9" fill="none"/></svg>
<div class="a" style="left:449px;top:549.8000000000001px;width:70px;height:11px;background:#000;border-radius:2.5px;"></div>
<div class="t" style="transform:scaleX(0.860);left:455.5px;top:551.85px;font-size:9px;color:#e0e0e0;">None</div>
<svg class="a" style="left:504px;top:553.5000000000001px;" width="8" height="5" viewBox="0 0 8 5"><path d="M0.8 0.8L4.0 4.2L7.2 0.8" stroke="#e8e8e8" stroke-width="1.5" fill="none"/></svg>
<div class="a" style="left:699px;top:549.6px;width:111px;height:11.7px;background:#7c3a3a;border-radius:2px;"></div>
<div class="a" style="left:1.5px;top:562.3px;width:533px;height:13.2px;background:#333333;"></div>
<div class="a" style="left:535px;top:562.3px;width:280px;height:13.2px;background:#353535;"></div>
<div class="a" style="left:535px;top:562.3px;width:5px;height:13.2px;background:#2c2c2c;"></div>
<div class="a" style="left:1.5px;top:574.5px;width:826px;height:1px;background:#1b1b1b;"></div>
<div class="a" style="left:4.5px;top:563.5px;width:10px;height:10px;background:#121212;border-radius:2px;"></div>
<svg class="a" style="left:5.5px;top:566.0px;" width="8" height="5" viewBox="0 0 8 5"><path d="M0.3 2.5Q4 -1 7.7 2.5Q4 6 0.3 2.5Z" fill="#e8e8e8"/><circle cx="4" cy="2.5" r="1.2" fill="#121212"/></svg>
<div class="a" style="left:28px;top:563.5px;width:9.5px;height:10px;background:#121212;border-radius:2px;"></div>
<div class="a" style="left:40px;top:563.5px;width:9.5px;height:10px;background:#121212;border-radius:2px;"></div>
<svg class="a" style="left:59px;top:565.0px;" width="5" height="7" viewBox="0 0 5 7"><path d="M0.8 0.8L3.8 3.5L0.8 6.2" stroke="#ddd" stroke-width="1.2" fill="none"/></svg>
<div class="a" style="left:68px;top:563.9px;width:9px;height:9.2px;background:#c03a3a;"></div>
<div class="t" style="left:85px;top:564.85px;font-size:9px;color:#c0c0c0;">8</div>
<svg class="a" style="left:108.5px;top:564.0px;" width="7" height="9" viewBox="0 0 7 9"><path d="M0.5 1H6.5M3.5 1V8.5M2 8.5H5" stroke="#a8a8a8" stroke-width="1.3" fill="none"/><path d="M0.7 0.5V2.5M6.3 0.5V2.5" stroke="#a8a8a8" stroke-width="1"/></svg>
<div class="t" style="transform:scaleX(0.972);left:121.5px;top:564.85px;font-size:9px;color:#c8c8c8;">Stop Scrolling</div>
<div class="a" style="left:194.5px;top:563.0px;width:34.5px;height:11px;background:#000;border-radius:2.5px;"></div>
<div class="t" style="transform:scaleX(0.955);left:200.5px;top:564.85px;font-size:9px;color:#e0e0e0;">Nc</div>
<svg class="a" style="left:217.0px;top:566.5px;" width="7" height="5" viewBox="0 0 7 5"><path d="M0.8 0.8L3.5 4.2L6.2 0.8" stroke="#e8e8e8" stroke-width="1.5" fill="none"/></svg>
<div class="a" style="left:234px;top:563.7px;width:9.5px;height:9.6px;background:#181818;border-radius:1.5px;"></div>
<svg class="a" style="left:248px;top:564.0px;" width="9" height="9" viewBox="0 0 9 9"><path d="M4.5 4.5A1 1 0 0 1 5.8 4.2A2 2 0 0 1 3.2 6.3A3 3 0 0 1 6.8 1.8A4 4 0 0 1 1 7.5" stroke="#9a9a9a" stroke-width="0.9" fill="none"/></svg>
<div class="a" style="left:260px;top:563.0px;width:35px;height:11px;background:#000;border-radius:2.5px;"></div>
<div class="t" style="transform:scaleX(0.955);left:266px;top:564.85px;font-size:9px;color:#e0e0e0;">Nc</div>
<svg class="a" style="left:283px;top:566.5px;" width="7" height="5" viewBox="0 0 7 5"><path d="M0.8 0.8L3.5 4.2L6.2 0.8" stroke="#e8e8e8" stroke-width="1.5" fill="none"/></svg>
<svg class="a" style="left:325.5px;top:564.0px;" width="10" height="9" viewBox="0 0 10 9"><path d="M1 4.5A4 4 0 0 1 9 4.5Z" fill="#c8c8c8"/><path d="M5 4.5V8M0.5 6H9.5M0.5 8.3H9.5" stroke="#c8c8c8" stroke-width="0.9"/><circle cx="3.5" cy="2.8" r="0.6" fill="#222"/><circle cx="6.5" cy="2.8" r="0.6" fill="#222"/></svg>
<div class="a" style="left:337px;top:563.5px;width:11px;height:10px;background:#2a2a2a;"></div>
<svg class="a" style="left:338.5px;top:564.5px;" width="8" height="8" viewBox="0 0 8 8"><circle cx="4" cy="4" r="1.6" fill="#666"/><path d="M4 0V1.5M4 6.5V8M0 4H1.5M6.5 4H8M1.2 1.2L2.2 2.2M5.8 5.8L6.8 6.8M1.2 6.8L2.2 5.8M5.8 2.2L6.8 1.2" stroke="#666" stroke-width="0.8"/></svg>
<div class="a" style="left:349px;top:563.5px;width:10.5px;height:10px;background:#1c1c1c;"></div>
<svg class="a" style="left:350px;top:564.0px;" width="8" height="9" viewBox="0 0 8 9"><path d="M0.8 8.5L7.5 0.8" stroke="#d8d8d8" stroke-width="1.1"/></svg>
<div class="a" style="left:360px;top:563.5px;width:10.5px;height:10px;background:#1c1c1c;"></div>
<div class="t" style="transform:scaleX(1.157);left:361px;top:563.80px;font-size:10px;color:#c8c8c8;font-style:italic;">fx</div>
<svg class="a" style="left:384px;top:563.5px;" width="10" height="10" viewBox="0 0 10 10"><circle cx="6" cy="4" r="3.5" fill="#9a9a9a" stroke="#222" stroke-width="0.6"/><path d="M1 8.5L4 5.5M2.5 9.5L5 7" stroke="#9a9a9a" stroke-width="1.2"/></svg>
<div class="a" style="left:396px;top:563.5px;width:10px;height:10px;background:#1c1c1c;"></div>
<div class="a" style="left:407px;top:563.5px;width:10px;height:10px;background:#1c1c1c;"></div>
<svg class="a" style="left:435px;top:564.0px;" width="9" height="9" viewBox="0 0 9 9"><path d="M4.5 4.5A1 1 0 0 1 5.8 4.2A2 2 0 0 1 3.2 6.3A3 3 0 0 1 6.8 1.8A4 4 0 0 1 1 7.5" stroke="#9a9a9a" stroke-width="0.9" fill="none"/></svg>
<div class="a" style="left:449px;top:563.0px;width:70px;height:11px;background:#000;border-radius:2.5px;"></div>
<div class="t" style="transform:scaleX(0.860);left:455.5px;top:564.85px;font-size:9px;color:#e0e0e0;">None</div>
<svg class="a" style="left:504px;top:566.7px;" width="8" height="5" viewBox="0 0 8 5"><path d="M0.8 0.8L4.0 4.2L7.2 0.8" stroke="#e8e8e8" stroke-width="1.5" fill="none"/></svg>
<div class="a" style="left:711.5px;top:562.8px;width:98.5px;height:11.7px;background:#7c3a3a;border-radius:2px;"></div>
<div class="a" style="left:1.5px;top:575.5px;width:533px;height:13.2px;background:#333333;"></div>
<div class="a" style="left:535px;top:575.5px;width:280px;height:13.2px;background:#353535;"></div>
<div class="a" style="left:535px;top:575.5px;width:5px;height:13.2px;background:#2c2c2c;"></div>
<div class="a" style="left:1.5px;top:587.7px;width:826px;height:1px;background:#1b1b1b;"></div>
<div class="a" style="left:4.5px;top:576.7px;width:10px;height:10px;background:#121212;border-radius:2px;"></div>
<svg class="a" style="left:5.5px;top:579.2px;" width="8" height="5" viewBox="0 0 8 5"><path d="M0.3 2.5Q4 -1 7.7 2.5Q4 6 0.3 2.5Z" fill="#e8e8e8"/><circle cx="4" cy="2.5" r="1.2" fill="#121212"/></svg>
<div class="a" style="left:28px;top:576.7px;width:9.5px;height:10px;background:#121212;border-radius:2px;"></div>
<div class="a" style="left:40px;top:576.7px;width:9.5px;height:10px;background:#121212;border-radius:2px;"></div>
<svg class="a" style="left:59px;top:578.2px;" width="5" height="7" viewBox="0 0 5 7"><path d="M0.8 0.8L3.8 3.5L0.8 6.2" stroke="#ddd" stroke-width="1.2" fill="none"/></svg>
<div class="a" style="left:68px;top:577.1px;width:9px;height:9.2px;background:#c03a3a;"></div>
<div class="t" style="left:85px;top:577.85px;font-size:9px;color:#c0c0c0;">9</div>
<svg class="a" style="left:108.5px;top:577.2px;" width="7" height="9" viewBox="0 0 7 9"><path d="M0.5 1H6.5M3.5 1V8.5M2 8.5H5" stroke="#a8a8a8" stroke-width="1.3" fill="none"/><path d="M0.7 0.5V2.5M6.3 0.5V2.5" stroke="#a8a8a8" stroke-width="1"/></svg>
<div class="t" style="transform:scaleX(0.999);left:121.5px;top:578.85px;font-size:9px;color:#c8c8c8;">Thing 2</div>
<div class="a" style="left:194.5px;top:576.2px;width:34.5px;height:11px;background:#000;border-radius:2.5px;"></div>
<div class="t" style="transform:scaleX(0.955);left:200.5px;top:577.85px;font-size:9px;color:#e0e0e0;">Nc</div>
<svg class="a" style="left:217.0px;top:579.7px;" width="7" height="5" viewBox="0 0 7 5"><path d="M0.8 0.8L3.5 4.2L6.2 0.8" stroke="#e8e8e8" stroke-width="1.5" fill="none"/></svg>
<div class="a" style="left:234px;top:576.9000000000001px;width:9.5px;height:9.6px;background:#181818;border-radius:1.5px;"></div>
<svg class="a" style="left:248px;top:577.2px;" width="9" height="9" viewBox="0 0 9 9"><path d="M4.5 4.5A1 1 0 0 1 5.8 4.2A2 2 0 0 1 3.2 6.3A3 3 0 0 1 6.8 1.8A4 4 0 0 1 1 7.5" stroke="#9a9a9a" stroke-width="0.9" fill="none"/></svg>
<div class="a" style="left:260px;top:576.2px;width:35px;height:11px;background:#000;border-radius:2.5px;"></div>
<div class="t" style="transform:scaleX(0.955);left:266px;top:577.85px;font-size:9px;color:#e0e0e0;">Nc</div>
<svg class="a" style="left:283px;top:579.7px;" width="7" height="5" viewBox="0 0 7 5"><path d="M0.8 0.8L3.5 4.2L6.2 0.8" stroke="#e8e8e8" stroke-width="1.5" fill="none"/></svg>
<svg class="a" style="left:325.5px;top:577.2px;" width="10" height="9" viewBox="0 0 10 9"><path d="M1 4.5A4 4 0 0 1 9 4.5Z" fill="#c8c8c8"/><path d="M5 4.5V8M0.5 6H9.5M0.5 8.3H9.5" stroke="#c8c8c8" stroke-width="0.9"/><circle cx="3.5" cy="2.8" r="0.6" fill="#222"/><circle cx="6.5" cy="2.8" r="0.6" fill="#222"/></svg>
<div class="a" style="left:337px;top:576.7px;width:11px;height:10px;background:#2a2a2a;"></div>
<svg class="a" style="left:338.5px;top:577.7px;" width="8" height="8" viewBox="0 0 8 8"><circle cx="4" cy="4" r="1.6" fill="#666"/><path d="M4 0V1.5M4 6.5V8M0 4H1.5M6.5 4H8M1.2 1.2L2.2 2.2M5.8 5.8L6.8 6.8M1.2 6.8L2.2 5.8M5.8 2.2L6.8 1.2" stroke="#666" stroke-width="0.8"/></svg>
<div class="a" style="left:349px;top:576.7px;width:10.5px;height:10px;background:#1c1c1c;"></div>
<svg class="a" style="left:350px;top:577.2px;" width="8" height="9" viewBox="0 0 8 9"><path d="M0.8 8.5L7.5 0.8" stroke="#d8d8d8" stroke-width="1.1"/></svg>
<svg class="a" style="left:384px;top:576.7px;" width="10" height="10" viewBox="0 0 10 10"><circle cx="6" cy="4" r="3.5" fill="#9a9a9a" stroke="#222" stroke-width="0.6"/><path d="M1 8.5L4 5.5M2.5 9.5L5 7" stroke="#9a9a9a" stroke-width="1.2"/></svg>
<div class="a" style="left:396px;top:576.7px;width:10px;height:10px;background:#1c1c1c;"></div>
<div class="a" style="left:407px;top:576.7px;width:10px;height:10px;background:#1c1c1c;"></div>
<svg class="a" style="left:435px;top:577.2px;" width="9" height="9" viewBox="0 0 9 9"><path d="M4.5 4.5A1 1 0 0 1 5.8 4.2A2 2 0 0 1 3.2 6.3A3 3 0 0 1 6.8 1.8A4 4 0 0 1 1 7.5" stroke="#9a9a9a" stroke-width="0.9" fill="none"/></svg>
<div class="a" style="left:449px;top:576.2px;width:70px;height:11px;background:#000;border-radius:2.5px;"></div>
<div class="t" style="transform:scaleX(0.860);left:455.5px;top:578.85px;font-size:9px;color:#e0e0e0;">None</div>
<svg class="a" style="left:504px;top:579.9000000000001px;" width="8" height="5" viewBox="0 0 8 5"><path d="M0.8 0.8L4.0 4.2L7.2 0.8" stroke="#e8e8e8" stroke-width="1.5" fill="none"/></svg>
<div class="a" style="left:687.4px;top:576.0px;width:8.600000000000023px;height:11.7px;background:#8c3b3b;"></div>
<div class="a" style="left:1.5px;top:586px;width:828px;height:12px;background:#1f1f1f;"></div>
<div class="a" style="left:1.5px;top:586px;width:533px;height:1px;background:#151515;"></div>
<div class="a" style="left:4.5px;top:587px;width:11px;height:11px;background:#3a3a3a;border-radius:2px;"></div>
<svg class="a" style="left:5.5px;top:588px;" width="9" height="9" viewBox="0 0 9 9"><rect x="0.5" y="0.5" width="5" height="5" fill="none" stroke="#aaa" stroke-width="0.8"/><rect x="3.5" y="3.5" width="5" height="5" fill="#777" stroke="#aaa" stroke-width="0.8"/></svg>
<div class="a" style="left:19.5px;top:587px;width:11px;height:11px;background:#3a3a3a;border-radius:2px;"></div>
<svg class="a" style="left:20.5px;top:588px;" width="9" height="9" viewBox="0 0 9 9"><circle cx="3.5" cy="3.5" r="3" fill="none" stroke="#bbb" stroke-width="0.9"/><rect x="4" y="4" width="4.5" height="4.5" fill="#bbb"/></svg>
<div class="t" style="transform:scaleX(1.330);left:36px;top:588.85px;font-size:9px;color:#aaa;">{}</div>
<svg class="a" style="left:50px;top:588px;" width="11" height="9" viewBox="0 0 11 9"><circle cx="3.5" cy="3" r="2.5" fill="#aaa"/><path d="M0 9Q3.5 4 7 9Z" fill="#aaa"/><path d="M8 2V6M6.5 4H10" stroke="#aaa" stroke-width="0.9"/></svg>
<div class="t" style="transform:scaleX(0.824);left:82px;top:588.85px;font-size:9px;color:#bcbcbc;">Frame Render Time:</div>
<div class="t" style="transform:scaleX(0.999);left:162px;top:588.85px;font-size:9px;color:#3cd0a0;">0ms</div>
<svg class="a" style="left:540px;top:589px;" width="8" height="5" viewBox="0 0 8 5"><path d="M0 5L4 0.5L8 5Z" fill="#aaa"/></svg>
<svg class="a" style="left:552px;top:587px;" width="10" height="10" viewBox="0 0 10 10"><circle cx="5" cy="5" r="3.6" fill="none" stroke="#ccc" stroke-width="1.3"/></svg>
<div class="a" style="left:563px;top:591.5px;width:35px;height:1px;background:#555;"></div>
<svg class="a" style="left:601px;top:588px;" width="14" height="6" viewBox="0 0 14 6"><path d="M0 6L4 1L7 4L10 0.5L14 6Z" fill="#aaa"/></svg>
<div class="a" style="left:815px;top:443px;width:13px;height:143px;background:#2a2a2a;"></div>
<div class="a" style="left:816px;top:457px;width:10px;height:38px;background:#555;border-radius:1px;"></div>
<svg class="a" style="left:817px;top:446px;" width="11" height="10" viewBox="0 0 11 10"><path d="M1 8L6 3L8.5 5.5L4 10Z" fill="none" stroke="#ccc" stroke-width="1"/><rect x="5" y="2" width="6" height="5" fill="#ccc"/><circle cx="3.5" cy="8" r="2" fill="none" stroke="#ddd" stroke-width="1"/></svg>
<svg class="a" style="left:556.5px;top:416px;" width="10" height="11" viewBox="0 0 10 11"><path d="M0.5 0.5H9.5V6.5L5 10.5L0.5 6.5Z" fill="#3a8ff0"/><path d="M3 3H7L5 6Z" fill="#0b3a80"/></svg>
<div class="a" style="left:560px;top:426px;width:1px;height:172px;background:#3a8ff0;"></div>
</body></html>
